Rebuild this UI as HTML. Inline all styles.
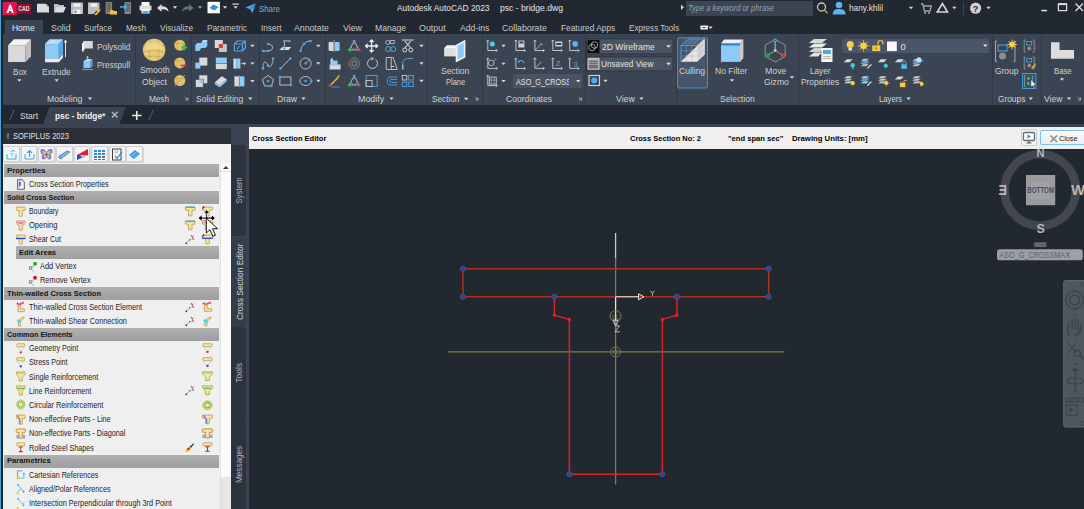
<!DOCTYPE html>
<html><head><meta charset="utf-8">
<style>
*{margin:0;padding:0;box-sizing:border-box}
html,body{width:1084px;height:509px;overflow:hidden;background:#212830;font-family:"Liberation Sans",sans-serif;position:relative}
.a{position:absolute}
.t{position:absolute;white-space:nowrap;line-height:1;transform-origin:0 0;z-index:5}
svg.a{overflow:visible}
</style></head><body>
<div class="a" style="left:0px;top:0px;width:1084px;height:34px;background:#222832;"></div>
<div class="a" style="left:0px;top:34px;width:1084px;height:71px;background:#3b4453;"></div>
<div class="a" style="left:0px;top:105px;width:1084px;height:19px;background:#222832;"></div>
<div class="a" style="left:0px;top:124px;width:1084px;height:385px;background:#3b4352;"></div>
<div class="a" style="left:3px;top:128px;width:228px;height:17px;background:#2a2f38;border-top-right-radius:3px;"></div>
<div class="a" style="left:3px;top:145px;width:228px;height:364px;background:#efefef;"></div>
<div class="a" style="left:249px;top:127px;width:835px;height:22px;background:#efefef;"></div>
<div class="a" style="left:249px;top:149px;width:835px;height:360px;background:#212830;"></div>
<span class="t" style="left:258.8px;top:3.96px;font-size:9.5px;color:#6cb2e2;font-weight:normal;font-style:normal;font-family:'Liberation Sans',sans-serif;transform:scaleX(0.828);">Share</span>
<span class="t" style="left:397.4px;top:3.46px;font-size:9.5px;color:#e4e4e4;font-weight:normal;font-style:normal;font-family:'Liberation Sans',sans-serif;transform:scaleX(0.880);">Autodesk AutoCAD 2023</span>
<span class="t" style="left:500.1px;top:3.46px;font-size:9.5px;color:#e4e4e4;font-weight:normal;font-style:normal;font-family:'Liberation Sans',sans-serif;transform:scaleX(0.904);">psc - bridge.dwg</span>
<div class="a" style="left:686px;top:1px;width:127px;height:15px;background:#3b4452;"></div>
<span class="t" style="left:688.3px;top:3.88px;font-size:9px;color:#9aa1aa;font-weight:normal;font-style:italic;font-family:'Liberation Sans',sans-serif;transform:scaleX(0.832);">Type a keyword or phrase</span>
<span class="t" style="left:849.0px;top:3.46px;font-size:9.5px;color:#e0e0e0;font-weight:normal;font-style:normal;font-family:'Liberation Sans',sans-serif;transform:scaleX(0.874);">hany.khlil</span>
<div class="a" style="left:5px;top:20px;width:38px;height:14px;background:#3b4453;"></div>
<span class="t" style="left:11.6px;top:22.66px;font-size:9.5px;color:#e8e8e8;font-weight:normal;font-style:normal;font-family:'Liberation Sans',sans-serif;transform:scaleX(0.892);">Home</span>
<span class="t" style="left:50.6px;top:22.66px;font-size:9.5px;color:#c8c8c8;font-weight:normal;font-style:normal;font-family:'Liberation Sans',sans-serif;transform:scaleX(0.928);">Solid</span>
<span class="t" style="left:83.7px;top:22.66px;font-size:9.5px;color:#c8c8c8;font-weight:normal;font-style:normal;font-family:'Liberation Sans',sans-serif;transform:scaleX(0.852);">Surface</span>
<span class="t" style="left:126.0px;top:22.66px;font-size:9.5px;color:#c8c8c8;font-weight:normal;font-style:normal;font-family:'Liberation Sans',sans-serif;transform:scaleX(0.861);">Mesh</span>
<span class="t" style="left:160.0px;top:22.66px;font-size:9.5px;color:#c8c8c8;font-weight:normal;font-style:normal;font-family:'Liberation Sans',sans-serif;transform:scaleX(0.872);">Visualize</span>
<span class="t" style="left:206.7px;top:22.66px;font-size:9.5px;color:#c8c8c8;font-weight:normal;font-style:normal;font-family:'Liberation Sans',sans-serif;transform:scaleX(0.869);">Parametric</span>
<span class="t" style="left:260.5px;top:22.66px;font-size:9.5px;color:#c8c8c8;font-weight:normal;font-style:normal;font-family:'Liberation Sans',sans-serif;transform:scaleX(0.863);">Insert</span>
<span class="t" style="left:294.3px;top:22.66px;font-size:9.5px;color:#c8c8c8;font-weight:normal;font-style:normal;font-family:'Liberation Sans',sans-serif;transform:scaleX(0.918);">Annotate</span>
<span class="t" style="left:343.0px;top:22.66px;font-size:9.5px;color:#c8c8c8;font-weight:normal;font-style:normal;font-family:'Liberation Sans',sans-serif;transform:scaleX(0.930);">View</span>
<span class="t" style="left:375.0px;top:22.66px;font-size:9.5px;color:#c8c8c8;font-weight:normal;font-style:normal;font-family:'Liberation Sans',sans-serif;transform:scaleX(0.903);">Manage</span>
<span class="t" style="left:419.4px;top:22.66px;font-size:9.5px;color:#c8c8c8;font-weight:normal;font-style:normal;font-family:'Liberation Sans',sans-serif;transform:scaleX(0.933);">Output</span>
<span class="t" style="left:459.7px;top:22.66px;font-size:9.5px;color:#c8c8c8;font-weight:normal;font-style:normal;font-family:'Liberation Sans',sans-serif;transform:scaleX(0.910);">Add-ins</span>
<span class="t" style="left:502.4px;top:22.66px;font-size:9.5px;color:#c8c8c8;font-weight:normal;font-style:normal;font-family:'Liberation Sans',sans-serif;transform:scaleX(0.922);">Collaborate</span>
<span class="t" style="left:561.0px;top:22.66px;font-size:9.5px;color:#c8c8c8;font-weight:normal;font-style:normal;font-family:'Liberation Sans',sans-serif;transform:scaleX(0.878);">Featured Apps</span>
<span class="t" style="left:629.0px;top:22.66px;font-size:9.5px;color:#c8c8c8;font-weight:normal;font-style:normal;font-family:'Liberation Sans',sans-serif;transform:scaleX(0.851);">Express Tools</span>
<div class="a" style="left:135px;top:35px;width:1px;height:69px;background:#313845;"></div>
<div class="a" style="left:191px;top:35px;width:1px;height:69px;background:#313845;"></div>
<div class="a" style="left:259px;top:35px;width:1px;height:69px;background:#313845;"></div>
<div class="a" style="left:325px;top:35px;width:1px;height:69px;background:#313845;"></div>
<div class="a" style="left:427px;top:35px;width:1px;height:69px;background:#313845;"></div>
<div class="a" style="left:482px;top:35px;width:1px;height:69px;background:#313845;"></div>
<div class="a" style="left:585px;top:35px;width:1px;height:69px;background:#313845;"></div>
<div class="a" style="left:676px;top:35px;width:1px;height:69px;background:#313845;"></div>
<div class="a" style="left:798px;top:35px;width:1px;height:69px;background:#313845;"></div>
<div class="a" style="left:992px;top:35px;width:1px;height:69px;background:#313845;"></div>
<div class="a" style="left:1041px;top:35px;width:1px;height:69px;background:#313845;"></div>
<span class="t" style="left:46.8px;top:93.96px;font-size:9.5px;color:#d2d2d2;font-weight:normal;font-style:normal;font-family:'Liberation Sans',sans-serif;transform:scaleX(0.918);">Modeling</span>
<span class="t" style="left:149.4px;top:93.96px;font-size:9.5px;color:#d2d2d2;font-weight:normal;font-style:normal;font-family:'Liberation Sans',sans-serif;transform:scaleX(0.861);">Mesh</span>
<span class="t" style="left:195.5px;top:93.96px;font-size:9.5px;color:#d2d2d2;font-weight:normal;font-style:normal;font-family:'Liberation Sans',sans-serif;transform:scaleX(0.896);">Solid Editing</span>
<span class="t" style="left:276.9px;top:93.96px;font-size:9.5px;color:#d2d2d2;font-weight:normal;font-style:normal;font-family:'Liberation Sans',sans-serif;transform:scaleX(0.898);">Draw</span>
<span class="t" style="left:358.3px;top:93.96px;font-size:9.5px;color:#d2d2d2;font-weight:normal;font-style:normal;font-family:'Liberation Sans',sans-serif;transform:scaleX(0.936);">Modify</span>
<span class="t" style="left:431.8px;top:93.96px;font-size:9.5px;color:#d2d2d2;font-weight:normal;font-style:normal;font-family:'Liberation Sans',sans-serif;transform:scaleX(0.865);">Section</span>
<span class="t" style="left:506.2px;top:93.96px;font-size:9.5px;color:#d2d2d2;font-weight:normal;font-style:normal;font-family:'Liberation Sans',sans-serif;transform:scaleX(0.898);">Coordinates</span>
<span class="t" style="left:615.7px;top:93.96px;font-size:9.5px;color:#d2d2d2;font-weight:normal;font-style:normal;font-family:'Liberation Sans',sans-serif;transform:scaleX(0.916);">View</span>
<span class="t" style="left:719.5px;top:93.96px;font-size:9.5px;color:#d2d2d2;font-weight:normal;font-style:normal;font-family:'Liberation Sans',sans-serif;transform:scaleX(0.888);">Selection</span>
<span class="t" style="left:878.7px;top:93.96px;font-size:9.5px;color:#d2d2d2;font-weight:normal;font-style:normal;font-family:'Liberation Sans',sans-serif;transform:scaleX(0.814);">Layers</span>
<span class="t" style="left:997.7px;top:93.96px;font-size:9.5px;color:#d2d2d2;font-weight:normal;font-style:normal;font-family:'Liberation Sans',sans-serif;transform:scaleX(0.876);">Groups</span>
<span class="t" style="left:1043.8px;top:93.96px;font-size:9.5px;color:#d2d2d2;font-weight:normal;font-style:normal;font-family:'Liberation Sans',sans-serif;transform:scaleX(0.901);">View</span>
<span class="t" style="left:13.0px;top:66.66px;font-size:9.5px;color:#d2d2d2;font-weight:normal;font-style:normal;font-family:'Liberation Sans',sans-serif;transform:scaleX(0.849);">Box</span>
<span class="t" style="left:42.3px;top:66.66px;font-size:9.5px;color:#d2d2d2;font-weight:normal;font-style:normal;font-family:'Liberation Sans',sans-serif;transform:scaleX(0.877);">Extrude</span>
<span class="t" style="left:96.6px;top:41.76px;font-size:9.5px;color:#d2d2d2;font-weight:normal;font-style:normal;font-family:'Liberation Sans',sans-serif;transform:scaleX(0.879);">Polysolid</span>
<span class="t" style="left:97.0px;top:59.66px;font-size:9.5px;color:#d2d2d2;font-weight:normal;font-style:normal;font-family:'Liberation Sans',sans-serif;transform:scaleX(0.845);">Presspull</span>
<span class="t" style="left:139.5px;top:65.36px;font-size:9.5px;color:#d2d2d2;font-weight:normal;font-style:normal;font-family:'Liberation Sans',sans-serif;transform:scaleX(0.913);">Smooth</span>
<span class="t" style="left:142.0px;top:76.66px;font-size:9.5px;color:#d2d2d2;font-weight:normal;font-style:normal;font-family:'Liberation Sans',sans-serif;transform:scaleX(0.907);">Object</span>
<span class="t" style="left:440.5px;top:65.86px;font-size:9.5px;color:#d2d2d2;font-weight:normal;font-style:normal;font-family:'Liberation Sans',sans-serif;transform:scaleX(0.890);">Section</span>
<span class="t" style="left:445.5px;top:77.16px;font-size:9.5px;color:#d2d2d2;font-weight:normal;font-style:normal;font-family:'Liberation Sans',sans-serif;transform:scaleX(0.790);">Plane</span>
<span class="t" style="left:679.3px;top:65.86px;font-size:9.5px;color:#d2d2d2;font-weight:normal;font-style:normal;font-family:'Liberation Sans',sans-serif;transform:scaleX(0.899);">Culling</span>
<span class="t" style="left:715.4px;top:65.86px;font-size:9.5px;color:#d2d2d2;font-weight:normal;font-style:normal;font-family:'Liberation Sans',sans-serif;transform:scaleX(0.900);">No Filter</span>
<span class="t" style="left:765.4px;top:65.86px;font-size:9.5px;color:#d2d2d2;font-weight:normal;font-style:normal;font-family:'Liberation Sans',sans-serif;transform:scaleX(0.921);">Move</span>
<span class="t" style="left:763.7px;top:77.16px;font-size:9.5px;color:#d2d2d2;font-weight:normal;font-style:normal;font-family:'Liberation Sans',sans-serif;transform:scaleX(0.907);">Gizmo</span>
<span class="t" style="left:809.7px;top:65.86px;font-size:9.5px;color:#d2d2d2;font-weight:normal;font-style:normal;font-family:'Liberation Sans',sans-serif;transform:scaleX(0.863);">Layer</span>
<span class="t" style="left:801.0px;top:77.16px;font-size:9.5px;color:#d2d2d2;font-weight:normal;font-style:normal;font-family:'Liberation Sans',sans-serif;transform:scaleX(0.880);">Properties</span>
<span class="t" style="left:995.1px;top:66.16px;font-size:9.5px;color:#d2d2d2;font-weight:normal;font-style:normal;font-family:'Liberation Sans',sans-serif;transform:scaleX(0.886);">Group</span>
<span class="t" style="left:1053.5px;top:66.16px;font-size:9.5px;color:#d2d2d2;font-weight:normal;font-style:normal;font-family:'Liberation Sans',sans-serif;transform:scaleX(0.817);">Base</span>
<svg class="a" style="left:0px;top:105px;" width="160" height="19" viewBox="0 0 160 19" preserveAspectRatio="none"><polygon points="43.2,19 49.5,2 125.8,2 119.5,19" fill="#3b4453"/><line x1="9.5" y1="15.5" x2="14" y2="5" stroke="#5a6270" stroke-width="1"/><line x1="148.6" y1="15.5" x2="153.3" y2="5" stroke="#5a6270" stroke-width="1"/><path d="M112,7 L117.5,12.5 M117.5,7 L112,12.5" stroke="#c0c4ca" stroke-width="1.2"/><path d="M132,10.5 H141.5 M136.75,6 V15" stroke="#e6e6e6" stroke-width="1.6"/></svg>
<span class="t" style="left:19.7px;top:110.76px;font-size:9.5px;color:#d8d8d8;font-weight:normal;font-style:normal;font-family:'Liberation Sans',sans-serif;transform:scaleX(0.897);">Start</span>
<span class="t" style="left:55.0px;top:110.76px;font-size:9.5px;color:#f0f0f0;font-weight:bold;font-style:normal;font-family:'Liberation Sans',sans-serif;transform:scaleX(0.874);">psc - bridge*</span>
<div class="a" style="left:7px;top:133px;width:2px;height:6px;background:#6a707a;"></div>
<span class="t" style="left:13.4px;top:130.76px;font-size:9.5px;color:#e0e0e0;font-weight:normal;font-style:normal;font-family:'Liberation Sans',sans-serif;transform:scaleX(0.789);">SOFIPLUS 2023</span>
<span class="t" style="left:251.6px;top:135.23px;font-size:8px;color:#000;font-weight:bold;font-style:normal;font-family:'Liberation Sans',sans-serif;transform:scaleX(0.939);">Cross Section Editor</span>
<span class="t" style="left:630.0px;top:135.23px;font-size:8px;color:#000;font-weight:bold;font-style:normal;font-family:'Liberation Sans',sans-serif;transform:scaleX(0.934);">Cross Section No: 2</span>
<span class="t" style="left:728.0px;top:135.23px;font-size:8px;color:#000;font-weight:bold;font-style:normal;font-family:'Liberation Sans',sans-serif;transform:scaleX(0.950);">"end  span sec"</span>
<span class="t" style="left:791.5px;top:135.23px;font-size:8px;color:#000;font-weight:bold;font-style:normal;font-family:'Liberation Sans',sans-serif;transform:scaleX(0.965);">Drawing Units: [mm]</span>
<div class="a" style="left:1px;top:0px;width:2px;height:509px;background:#1e222a;"></div>
<div class="a" style="left:0px;top:0px;width:1.2px;height:509px;background:#4aa6d6;"></div>
<div class="a" style="left:3px;top:144px;width:228px;height:18px;background:#f2f2f2;"></div>
<div class="a" style="left:3px;top:146px;width:16.8px;height:16px;background:#f4f4f4;border:1px solid #cfcfcf;border-radius:1px;box-shadow:1px 1px 0 #d8d8d8;"></div>
<div class="a" style="left:20.7px;top:146px;width:16.8px;height:16px;background:#f4f4f4;border:1px solid #cfcfcf;border-radius:1px;box-shadow:1px 1px 0 #d8d8d8;"></div>
<div class="a" style="left:38.1px;top:146px;width:16.8px;height:16px;background:#f4f4f4;border:1px solid #cfcfcf;border-radius:1px;box-shadow:1px 1px 0 #d8d8d8;"></div>
<div class="a" style="left:55.8px;top:146px;width:16.8px;height:16px;background:#f4f4f4;border:1px solid #cfcfcf;border-radius:1px;box-shadow:1px 1px 0 #d8d8d8;"></div>
<div class="a" style="left:73.5px;top:146px;width:16.8px;height:16px;background:#f4f4f4;border:1px solid #cfcfcf;border-radius:1px;box-shadow:1px 1px 0 #d8d8d8;"></div>
<div class="a" style="left:91.2px;top:146px;width:16.8px;height:16px;background:#f4f4f4;border:1px solid #cfcfcf;border-radius:1px;box-shadow:1px 1px 0 #d8d8d8;"></div>
<div class="a" style="left:108.9px;top:146px;width:16.8px;height:16px;background:#f4f4f4;border:1px solid #cfcfcf;border-radius:1px;box-shadow:1px 1px 0 #d8d8d8;"></div>
<div class="a" style="left:126.3px;top:146px;width:16.8px;height:16px;background:#f4f4f4;border:1px solid #cfcfcf;border-radius:1px;box-shadow:1px 1px 0 #d8d8d8;"></div>
<svg class="a" style="left:5px;top:147.5px;" width="13" height="13" viewBox="0 0 13 13" preserveAspectRatio="none"><path d="M2,6 V11 H11 V6" fill="none" stroke="#3aa8e8" stroke-width="1"/><text x="6.5" y="9" font-size="6" fill="#3aa8e8" text-anchor="middle" font-family="Liberation Sans">?</text><path d="M6,4 L8,2 L10,4" fill="none" stroke="#3aa8e8"/></svg>
<svg class="a" style="left:22.7px;top:147.5px;" width="13" height="13" viewBox="0 0 13 13" preserveAspectRatio="none"><path d="M2,6 V11 H11 V6" fill="none" stroke="#3aa8e8" stroke-width="1"/><path d="M6.5,9 V3 M4,5 L6.5,2.5 L9,5" fill="none" stroke="#3aa8e8" stroke-width="1.2"/></svg>
<svg class="a" style="left:40.1px;top:147.5px;" width="13" height="13" viewBox="0 0 13 13" preserveAspectRatio="none"><path d="M6.5,4 C5,1 1,0 0.5,2.5 C0,5 2,6.5 3,6.5 C1,7.5 1,11 3.5,11.5 C5,11.8 6,10 6.5,9 C7,10 8,11.8 9.5,11.5 C12,11 12,7.5 10,6.5 C11,6.5 13,5 12.5,2.5 C12,0 8,1 6.5,4Z" fill="#8a70d8"/><path d="M6.5,5 C5.5,3 2.5,2.5 2.3,3.5 C2.2,5 3.5,6.3 5,6.5 C3.5,7 2.8,9.5 4,10 C5,10.3 6,8.5 6.5,7.8 C7,8.5 8,10.3 9,10 C10.2,9.5 9.5,7 8,6.5 C9.5,6.3 10.8,5 10.7,3.5 C10.5,2.5 7.5,3 6.5,5Z" fill="#a8e050"/><path d="M6.5,5.5 C6,4.5 4.5,4.3 4.5,5.2 C4.5,6.2 5.5,6.8 6.5,8.2 C7.5,6.8 8.5,6.2 8.5,5.2 C8.5,4.3 7,4.5 6.5,5.5Z" fill="#f0d020"/><circle cx="6.5" cy="6.5" r="1.2" fill="#e02828"/></svg>
<svg class="a" style="left:57.8px;top:147.5px;" width="13" height="13" viewBox="0 0 13 13" preserveAspectRatio="none"><path d="M1,8 L9,3 L12,4 L4,10 Z" fill="#7ab8e0" stroke="#4a7aa8" stroke-width="0.8"/><path d="M1,8 L1,10 L4,11" fill="none" stroke="#4a7aa8"/></svg>
<svg class="a" style="left:75.5px;top:147.5px;" width="13" height="13" viewBox="0 0 13 13" preserveAspectRatio="none"><path d="M1,7 L12,7 L12,1 Z" fill="#e02030"/><path d="M1,7 L12,7 L1,12 Z" fill="#2050c8"/><path d="M4,7 L12,7 L6,10 Z" fill="#90c0f0"/></svg>
<svg class="a" style="left:93.2px;top:147.5px;" width="13" height="13" viewBox="0 0 13 13" preserveAspectRatio="none"><g fill="#2a8ae0"><rect x="1" y="2" width="3" height="2"/><rect x="5" y="2" width="3" height="2"/><rect x="9" y="2" width="3" height="2"/><rect x="1" y="5" width="3" height="2"/><rect x="5" y="5" width="3" height="2"/><rect x="9" y="5" width="3" height="2"/><rect x="1" y="8" width="3" height="2"/></g><g fill="#707070"><rect x="5" y="8" width="3" height="2"/><rect x="9" y="8" width="3" height="2"/><rect x="1" y="11" width="3" height="1"/><rect x="5" y="11" width="3" height="1"/><rect x="9" y="11" width="3" height="1"/></g></svg>
<svg class="a" style="left:110.9px;top:147.5px;" width="13" height="13" viewBox="0 0 13 13" preserveAspectRatio="none"><rect x="1.5" y="1" width="8.5" height="11" fill="#f8f8f8" stroke="#404040" stroke-width="1"/><path d="M3.2,3 H8 M3.2,4.8 H7" stroke="#909090" stroke-width="0.6"/><path d="M4,8 L6,10.5 L11,4" fill="none" stroke="#2a90e0" stroke-width="1.3"/></svg>
<svg class="a" style="left:128.3px;top:147.5px;" width="13" height="13" viewBox="0 0 13 13" preserveAspectRatio="none"><path d="M1,7 L7,2 L12,6 L6,11 Z" fill="#3a9ae8"/><path d="M3,6 L8,9 M5,4.5 L10,7.5 M4,8 L9,3.5" stroke="#9ad0f8" stroke-width="0.6"/></svg>
<div class="a" style="left:4px;top:164px;width:215px;height:13px;background:linear-gradient(#b0b0b0,#9e9e9e);"></div>
<span class="t" style="left:7.2px;top:166.83px;font-size:8px;color:#141414;font-weight:bold;font-style:normal;font-family:'Liberation Sans',sans-serif;transform:scaleX(0.975);">Properties</span>
<div class="a" style="left:4px;top:191px;width:215px;height:13px;background:linear-gradient(#b0b0b0,#9e9e9e);"></div>
<span class="t" style="left:7.2px;top:193.83px;font-size:8px;color:#141414;font-weight:bold;font-style:normal;font-family:'Liberation Sans',sans-serif;transform:scaleX(0.887);">Solid Cross Section</span>
<div class="a" style="left:15.5px;top:246px;width:203.5px;height:13px;background:linear-gradient(#b0b0b0,#9e9e9e);"></div>
<span class="t" style="left:18.5px;top:248.83px;font-size:8px;color:#141414;font-weight:bold;font-style:normal;font-family:'Liberation Sans',sans-serif;transform:scaleX(0.943);">Edit Areas</span>
<div class="a" style="left:4px;top:287px;width:215px;height:13px;background:linear-gradient(#b0b0b0,#9e9e9e);"></div>
<span class="t" style="left:7.2px;top:289.83px;font-size:8px;color:#141414;font-weight:bold;font-style:normal;font-family:'Liberation Sans',sans-serif;transform:scaleX(0.940);">Thin-walled Cross Section</span>
<div class="a" style="left:4px;top:328px;width:215px;height:13px;background:linear-gradient(#b0b0b0,#9e9e9e);"></div>
<span class="t" style="left:7.2px;top:330.83px;font-size:8px;color:#141414;font-weight:bold;font-style:normal;font-family:'Liberation Sans',sans-serif;transform:scaleX(0.905);">Common Elements</span>
<div class="a" style="left:4px;top:454.6px;width:215px;height:13px;background:linear-gradient(#b0b0b0,#9e9e9e);"></div>
<span class="t" style="left:7.2px;top:457.43px;font-size:8px;color:#141414;font-weight:bold;font-style:normal;font-family:'Liberation Sans',sans-serif;transform:scaleX(0.958);">Parametrics</span>
<div class="a" style="left:220.3px;top:162.7px;width:10.5px;height:346.3px;background:#e6e6e6;border-left:1px solid #dcdcdc;"></div>
<div class="a" style="left:220.3px;top:172.4px;width:10.5px;height:305px;background:#fafafa;border-left:1px solid #e2e2e2;"></div>
<div class="a" style="left:220.3px;top:162.7px;width:10.5px;height:9.7px;background:#fbfbfb;border-left:1px solid #e2e2e2;border-bottom:1px solid #e0e0e0;"></div>
<svg class="a" style="left:222.5px;top:166px;" width="5.8" height="3" viewBox="0 0 5.8 3" preserveAspectRatio="none"><path d="M0,3 L2.9,0 L5.8,3 Z" fill="#444"/></svg>
<span class="t" style="left:28.9px;top:180.12px;font-size:8.6px;color:#1c1c2c;font-weight:normal;font-style:normal;font-family:'Liberation Sans',sans-serif;transform:scaleX(0.837);">Cross Section Properties</span>
<svg class="a" style="left:16.3px;top:178.5px;" width="9.5" height="11" viewBox="0 0 12 12" preserveAspectRatio="none"><path d="M2,0.8 H8 L10.5,3.3 V11.2 H2 Z" fill="#f4f4fb" stroke="#303030" stroke-width="0.9"/><path d="M4,3 H7 L6,5 L7,7 H4 Z" fill="#6a60d8"/><rect x="3.5" y="3" width="1.2" height="6" fill="#6a60d8"/></svg>
<span class="t" style="left:28.9px;top:207.12px;font-size:8.6px;color:#1c1c2c;font-weight:normal;font-style:normal;font-family:'Liberation Sans',sans-serif;transform:scaleX(0.802);">Boundary</span>
<svg class="a" style="left:16.3px;top:205.5px;" width="9.5" height="11" viewBox="0 0 12 12" preserveAspectRatio="none"><path d="M1,1.2 H11 Q11.6,1.2 11.6,2 V4 Q11.6,4.8 11,4.8 H8 V10.5 Q8,11.2 7.3,11.2 H4.7 Q4,11.2 4,10.5 V4.8 H1 Q0.4,4.8 0.4,4 V2 Q0.4,1.2 1,1.2Z" fill="#f3e7a2" stroke="#b89640" stroke-width="0.9"/></svg>
<svg class="a" style="left:184.5px;top:205.8px;" width="10.5" height="10.5" viewBox="0 0 12 12" preserveAspectRatio="none"><path d="M1,1.2 H11 Q11.6,1.2 11.6,2 V4 Q11.6,4.8 11,4.8 H8 V10.5 Q8,11.2 7.3,11.2 H4.7 Q4,11.2 4,10.5 V4.8 H1 Q0.4,4.8 0.4,4 V2 Q0.4,1.2 1,1.2Z" fill="#f3e7a2" stroke="#b89640" stroke-width="0.9"/><rect x="0.8" y="0.6" width="10.4" height="1.6" fill="#40a8e8"/></svg>
<svg class="a" style="left:201.7px;top:205.8px;" width="11" height="10.5" viewBox="0 0 12 12" preserveAspectRatio="none"><path d="M1,1.2 H11 Q11.6,1.2 11.6,2 V4 Q11.6,4.8 11,4.8 H8 V10.5 Q8,11.2 7.3,11.2 H4.7 Q4,11.2 4,10.5 V4.8 H1 Q0.4,4.8 0.4,4 V2 Q0.4,1.2 1,1.2Z" fill="#f3e7a2" stroke="#b89640" stroke-width="0.9"/><path d="M0.5,3 L2.5,0.5" stroke="#7a2050" stroke-width="1.5"/></svg>
<span class="t" style="left:28.9px;top:221.12px;font-size:8.6px;color:#1c1c2c;font-weight:normal;font-style:normal;font-family:'Liberation Sans',sans-serif;transform:scaleX(0.874);">Opening</span>
<svg class="a" style="left:184.5px;top:219.8px;" width="10.5" height="10.5" viewBox="0 0 12 12" preserveAspectRatio="none"><path d="M1,1.2 H11 Q11.6,1.2 11.6,2 V4 Q11.6,4.8 11,4.8 H8 V10.5 Q8,11.2 7.3,11.2 H4.7 Q4,11.2 4,10.5 V4.8 H1 Q0.4,4.8 0.4,4 V2 Q0.4,1.2 1,1.2Z" fill="#f3e7a2" stroke="#b89640" stroke-width="0.9"/><rect x="0.8" y="0.6" width="10.4" height="1.6" fill="#40a8e8"/></svg>
<svg class="a" style="left:201.7px;top:219.8px;" width="11" height="10.5" viewBox="0 0 12 12" preserveAspectRatio="none"><path d="M1,1.2 H11 Q11.6,1.2 11.6,2 V4 Q11.6,4.8 11,4.8 H8 V10.5 Q8,11.2 7.3,11.2 H4.7 Q4,11.2 4,10.5 V4.8 H1 Q0.4,4.8 0.4,4 V2 Q0.4,1.2 1,1.2Z" fill="#f3e7a2" stroke="#b89640" stroke-width="0.9"/><path d="M0.5,3 L2.5,0.5" stroke="#7a2050" stroke-width="1.5"/></svg>
<span class="t" style="left:28.9px;top:235.12px;font-size:8.6px;color:#1c1c2c;font-weight:normal;font-style:normal;font-family:'Liberation Sans',sans-serif;transform:scaleX(0.827);">Shear Cut</span>
<svg class="a" style="left:16.3px;top:233.5px;" width="9.5" height="11" viewBox="0 0 12 12" preserveAspectRatio="none"><path d="M1,1.2 H11 Q11.6,1.2 11.6,2 V4 Q11.6,4.8 11,4.8 H8 V10.5 Q8,11.2 7.3,11.2 H4.7 Q4,11.2 4,10.5 V4.8 H1 Q0.4,4.8 0.4,4 V2 Q0.4,1.2 1,1.2Z" fill="#f3e7a2" stroke="#b89640" stroke-width="0.9"/><rect x="0" y="4.2" width="12" height="1.4" fill="#2040d0"/></svg>
<svg class="a" style="left:184.5px;top:233.8px;" width="10.5" height="10.5" viewBox="0 0 12 12" preserveAspectRatio="none"><circle cx="1.5" cy="10.5" r="1.1" fill="#1a4a9a"/><path d="M2.5,9.5 L5,7" stroke="#c03040" stroke-width="0.7"/><circle cx="5.5" cy="6.5" r="0.9" fill="#d02030"/><path d="M7,1 L8,3.5 L10,2 M8,4 L9.5,5 M7.5,5.5 L10.5,6" stroke="#7a2050" stroke-width="0.8" fill="none"/></svg>
<svg class="a" style="left:201.7px;top:233.8px;" width="11" height="10.5" viewBox="0 0 12 12" preserveAspectRatio="none"><path d="M1,1.2 H11 Q11.6,1.2 11.6,2 V4 Q11.6,4.8 11,4.8 H8 V10.5 Q8,11.2 7.3,11.2 H4.7 Q4,11.2 4,10.5 V4.8 H1 Q0.4,4.8 0.4,4 V2 Q0.4,1.2 1,1.2Z" fill="#f3e7a2" stroke="#b89640" stroke-width="0.9"/><rect x="0" y="4.2" width="12" height="1.4" fill="#2040d0"/><path d="M0.5,3 L2.5,0.5" stroke="#7a2050" stroke-width="1.5"/></svg>
<span class="t" style="left:40.0px;top:262.12px;font-size:8.6px;color:#1c1c2c;font-weight:normal;font-style:normal;font-family:'Liberation Sans',sans-serif;transform:scaleX(0.868);">Add Vertex</span>
<svg class="a" style="left:28px;top:261px;" width="10" height="11" viewBox="0 0 12 12" preserveAspectRatio="none"><circle cx="3" cy="7.5" r="1.6" fill="none" stroke="#404040" stroke-width="0.8"/><path d="M4,8 L8,4 M4,9 L7,12" stroke="#5a9ac8" stroke-width="0.8"/><circle cx="8.5" cy="3" r="2.3" fill="#20b020"/></svg>
<span class="t" style="left:40.0px;top:276.12px;font-size:8.6px;color:#1c1c2c;font-weight:normal;font-style:normal;font-family:'Liberation Sans',sans-serif;transform:scaleX(0.863);">Remove Vertex</span>
<svg class="a" style="left:28px;top:275px;" width="10" height="11" viewBox="0 0 12 12" preserveAspectRatio="none"><circle cx="3" cy="7.5" r="1.6" fill="none" stroke="#404040" stroke-width="0.8"/><path d="M4,8 L8,4 M4,9 L7,12" stroke="#5a9ac8" stroke-width="0.8"/><circle cx="8.5" cy="3" r="2.3" fill="#d01818"/></svg>
<span class="t" style="left:28.9px;top:303.12px;font-size:8.6px;color:#1c1c2c;font-weight:normal;font-style:normal;font-family:'Liberation Sans',sans-serif;transform:scaleX(0.846);">Thin-walled Cross Section Element</span>
<svg class="a" style="left:16.3px;top:301.5px;" width="9.5" height="11" viewBox="0 0 12 12" preserveAspectRatio="none"><path d="M2.5,3 V10.5 H10.5 V7.5 H5.5 V3Z" fill="#f3e7a2" stroke="#b89640" stroke-width="0.9"/><path d="M3,3 L10,0.5" stroke="#ff5070" stroke-width="2.2"/><path d="M1,2.5 L2.5,0.8" stroke="#7a2050" stroke-width="1.3"/></svg>
<svg class="a" style="left:184.5px;top:301.8px;" width="10.5" height="10.5" viewBox="0 0 12 12" preserveAspectRatio="none"><circle cx="1.5" cy="10.5" r="1.1" fill="#1a4a9a"/><path d="M2.5,9.5 L5,7" stroke="#c03040" stroke-width="0.7"/><circle cx="5.5" cy="6.5" r="0.9" fill="#d02030"/><path d="M7,1 L8,3.5 L10,2 M8,4 L9.5,5 M7.5,5.5 L10.5,6" stroke="#7a2050" stroke-width="0.8" fill="none"/></svg>
<svg class="a" style="left:201.7px;top:301.8px;" width="11" height="10.5" viewBox="0 0 12 12" preserveAspectRatio="none"><path d="M2.5,3 V10.5 H10.5 V7.5 H5.5 V3Z" fill="#f3e7a2" stroke="#b89640" stroke-width="0.9"/><path d="M3,3 L10,0.5" stroke="#ff5070" stroke-width="2.2"/><path d="M1,2.5 L2.5,0.8" stroke="#7a2050" stroke-width="1.3"/></svg>
<span class="t" style="left:28.9px;top:317.12px;font-size:8.6px;color:#1c1c2c;font-weight:normal;font-style:normal;font-family:'Liberation Sans',sans-serif;transform:scaleX(0.849);">Thin-walled Shear Connection</span>
<svg class="a" style="left:16.3px;top:315.5px;" width="9.5" height="11" viewBox="0 0 12 12" preserveAspectRatio="none"><path d="M3,11 V5 L9,0.8 L10.5,2 L5.5,6 V11Z" fill="#f3e7a2" stroke="#b89640" stroke-width="0.9"/><path d="M1,5.5 L5,8 L6.5,5.5 L3,3.5Z" fill="#30e0f0"/></svg>
<svg class="a" style="left:184.5px;top:315.8px;" width="10.5" height="10.5" viewBox="0 0 12 12" preserveAspectRatio="none"><circle cx="1.5" cy="10.5" r="1.1" fill="#1a4a9a"/><path d="M2.5,9.5 L5,7" stroke="#c03040" stroke-width="0.7"/><circle cx="5.5" cy="6.5" r="0.9" fill="#d02030"/><path d="M7,1 L8,3.5 L10,2 M8,4 L9.5,5 M7.5,5.5 L10.5,6" stroke="#7a2050" stroke-width="0.8" fill="none"/></svg>
<svg class="a" style="left:201.7px;top:315.8px;" width="11" height="10.5" viewBox="0 0 12 12" preserveAspectRatio="none"><path d="M3,11 V5 L9,0.8 L10.5,2 L5.5,6 V11Z" fill="#f3e7a2" stroke="#b89640" stroke-width="0.9"/><path d="M1,5.5 L5,8 L6.5,5.5 L3,3.5Z" fill="#30e0f0"/></svg>
<span class="t" style="left:28.9px;top:344.12px;font-size:8.6px;color:#1c1c2c;font-weight:normal;font-style:normal;font-family:'Liberation Sans',sans-serif;transform:scaleX(0.824);">Geometry Point</span>
<svg class="a" style="left:16.3px;top:342.5px;" width="9.5" height="11" viewBox="0 0 12 12" preserveAspectRatio="none"><rect x="1" y="0.8" width="10" height="3.4" rx="0.8" fill="#f3e7a2" stroke="#b89640" stroke-width="0.8"/><path d="M1.5,4.5 L6,10 L10.5,4.5" fill="none" stroke="#b8b8b8" stroke-width="0.6"/><circle cx="6" cy="10.2" r="1.3" fill="#e02020"/></svg>
<svg class="a" style="left:201.7px;top:342.8px;" width="11" height="10.5" viewBox="0 0 12 12" preserveAspectRatio="none"><rect x="1" y="0.8" width="10" height="3.4" rx="0.8" fill="#f3e7a2" stroke="#b89640" stroke-width="0.8"/><path d="M1.5,4.5 L6,10 L10.5,4.5" fill="none" stroke="#b8b8b8" stroke-width="0.6"/><circle cx="6" cy="10.2" r="1.3" fill="#e02020"/></svg>
<span class="t" style="left:28.9px;top:358.32px;font-size:8.6px;color:#1c1c2c;font-weight:normal;font-style:normal;font-family:'Liberation Sans',sans-serif;transform:scaleX(0.831);">Stress Point</span>
<svg class="a" style="left:16.3px;top:356.7px;" width="9.5" height="11" viewBox="0 0 12 12" preserveAspectRatio="none"><rect x="1" y="0.8" width="10" height="3.4" rx="0.8" fill="#f3e7a2" stroke="#b89640" stroke-width="0.8"/><path d="M1.5,4.5 L6,10 L10.5,4.5" fill="none" stroke="#b8b8b8" stroke-width="0.6"/><circle cx="6" cy="10.2" r="1.3" fill="#2040e0"/></svg>
<svg class="a" style="left:201.7px;top:357.0px;" width="11" height="10.5" viewBox="0 0 12 12" preserveAspectRatio="none"><rect x="1" y="0.8" width="10" height="3.4" rx="0.8" fill="#f3e7a2" stroke="#b89640" stroke-width="0.8"/><path d="M1.5,4.5 L6,10 L10.5,4.5" fill="none" stroke="#b8b8b8" stroke-width="0.6"/><circle cx="6" cy="10.2" r="1.3" fill="#2040e0"/></svg>
<span class="t" style="left:28.9px;top:372.52px;font-size:8.6px;color:#1c1c2c;font-weight:normal;font-style:normal;font-family:'Liberation Sans',sans-serif;transform:scaleX(0.843);">Single Reinforcement</span>
<svg class="a" style="left:16.3px;top:370.9px;" width="9.5" height="11" viewBox="0 0 12 12" preserveAspectRatio="none"><path d="M0.6,1 H11.4 V3.5 L8,7 V11 H4 V7 L0.6,3.5Z" fill="#f3e7a2" stroke="#b89640" stroke-width="0.9"/><path d="M2,2.3 H10" stroke="#40d040" stroke-width="1" stroke-dasharray="1.5,0.8"/></svg>
<svg class="a" style="left:201.7px;top:371.2px;" width="11" height="10.5" viewBox="0 0 12 12" preserveAspectRatio="none"><path d="M0.6,1 H11.4 V3.5 L8,7 V11 H4 V7 L0.6,3.5Z" fill="#f3e7a2" stroke="#b89640" stroke-width="0.9"/><path d="M2,2.3 H10" stroke="#40d040" stroke-width="1" stroke-dasharray="1.5,0.8"/></svg>
<span class="t" style="left:28.9px;top:386.72px;font-size:8.6px;color:#1c1c2c;font-weight:normal;font-style:normal;font-family:'Liberation Sans',sans-serif;transform:scaleX(0.837);">Line Reinforcement</span>
<svg class="a" style="left:16.3px;top:385.1px;" width="9.5" height="11" viewBox="0 0 12 12" preserveAspectRatio="none"><path d="M0.6,1 H11.4 V3.5 L8,7 V11 H4 V7 L0.6,3.5Z" fill="#f3e7a2" stroke="#b89640" stroke-width="0.9"/><rect x="2" y="3" width="8" height="1.6" fill="#40d040"/></svg>
<svg class="a" style="left:184.5px;top:385.40000000000003px;" width="10.5" height="10.5" viewBox="0 0 12 12" preserveAspectRatio="none"><circle cx="1.5" cy="10.5" r="1.1" fill="#1a4a9a"/><path d="M2.5,9.5 L5,7" stroke="#c03040" stroke-width="0.7"/><circle cx="5.5" cy="6.5" r="0.9" fill="#d02030"/><path d="M7,1 L8,3.5 L10,2 M8,4 L9.5,5 M7.5,5.5 L10.5,6" stroke="#7a2050" stroke-width="0.8" fill="none"/></svg>
<svg class="a" style="left:201.7px;top:385.40000000000003px;" width="11" height="10.5" viewBox="0 0 12 12" preserveAspectRatio="none"><path d="M0.6,1 H11.4 V3.5 L8,7 V11 H4 V7 L0.6,3.5Z" fill="#f3e7a2" stroke="#b89640" stroke-width="0.9"/><rect x="2" y="3" width="8" height="1.6" fill="#40d040"/></svg>
<span class="t" style="left:28.9px;top:400.92px;font-size:8.6px;color:#1c1c2c;font-weight:normal;font-style:normal;font-family:'Liberation Sans',sans-serif;transform:scaleX(0.846);">Circular Reinforcement</span>
<svg class="a" style="left:16.3px;top:399.3px;" width="9.5" height="11" viewBox="0 0 12 12" preserveAspectRatio="none"><circle cx="6" cy="6" r="5" fill="#f3e7a2" stroke="#b89640" stroke-width="0.9"/><circle cx="6" cy="6" r="3" fill="none" stroke="#40d040" stroke-width="1.2"/><circle cx="6" cy="6" r="1.8" fill="#f3e7a2"/></svg>
<svg class="a" style="left:201.7px;top:399.6px;" width="11" height="10.5" viewBox="0 0 12 12" preserveAspectRatio="none"><circle cx="6" cy="6" r="5" fill="#f3e7a2" stroke="#b89640" stroke-width="0.9"/><circle cx="6" cy="6" r="3" fill="none" stroke="#40d040" stroke-width="1.2"/><circle cx="6" cy="6" r="1.8" fill="#f3e7a2"/></svg>
<span class="t" style="left:28.9px;top:415.12px;font-size:8.6px;color:#1c1c2c;font-weight:normal;font-style:normal;font-family:'Liberation Sans',sans-serif;transform:scaleX(0.843);">Non-effective Parts - Line</span>
<svg class="a" style="left:16.3px;top:413.5px;" width="9.5" height="11" viewBox="0 0 12 12" preserveAspectRatio="none"><path d="M1,1.2 H11 Q11.6,1.2 11.6,2 V4 Q11.6,4.8 11,4.8 H8 V10.5 Q8,11.2 7.3,11.2 H4.7 Q4,11.2 4,10.5 V4.8 H1 Q0.4,4.8 0.4,4 V2 Q0.4,1.2 1,1.2Z" fill="#f3e7a2" stroke="#b89640" stroke-width="0.9"/><path d="M1.5,1.5 L5,6 L5,11" fill="none" stroke="#8a70d0" stroke-width="1.4"/></svg>
<svg class="a" style="left:201.7px;top:413.8px;" width="11" height="10.5" viewBox="0 0 12 12" preserveAspectRatio="none"><path d="M1,1.2 H11 Q11.6,1.2 11.6,2 V4 Q11.6,4.8 11,4.8 H8 V10.5 Q8,11.2 7.3,11.2 H4.7 Q4,11.2 4,10.5 V4.8 H1 Q0.4,4.8 0.4,4 V2 Q0.4,1.2 1,1.2Z" fill="#f3e7a2" stroke="#b89640" stroke-width="0.9"/><path d="M1.5,1.5 L5,6 L5,11" fill="none" stroke="#8a70d0" stroke-width="1.4"/></svg>
<span class="t" style="left:28.9px;top:429.32px;font-size:8.6px;color:#1c1c2c;font-weight:normal;font-style:normal;font-family:'Liberation Sans',sans-serif;transform:scaleX(0.842);">Non-effective Parts - Diagonal</span>
<svg class="a" style="left:16.3px;top:427.7px;" width="9.5" height="11" viewBox="0 0 12 12" preserveAspectRatio="none"><path d="M1,1.2 H11 Q11.6,1.2 11.6,2 V4 Q11.6,4.8 11,4.8 H8 V10.5 Q8,11.2 7.3,11.2 H4.7 Q4,11.2 4,10.5 V4.8 H1 Q0.4,4.8 0.4,4 V2 Q0.4,1.2 1,1.2Z" fill="#f3e7a2" stroke="#b89640" stroke-width="0.9"/><path d="M0.5,7.5 H11.5 V11.5 H0.5Z" fill="#9a80d8" opacity="0.75"/><path d="M1,1.2 H11 Q11.6,1.2 11.6,2 V4 Q11.6,4.8 11,4.8 H8 V10.5 Q8,11.2 7.3,11.2 H4.7 Q4,11.2 4,10.5 V4.8 H1 Q0.4,4.8 0.4,4 V2 Q0.4,1.2 1,1.2Z" fill="#f3e7a2" stroke="#b89640" stroke-width="0.9"/></svg>
<svg class="a" style="left:201.7px;top:428.0px;" width="11" height="10.5" viewBox="0 0 12 12" preserveAspectRatio="none"><path d="M1,1.2 H11 Q11.6,1.2 11.6,2 V4 Q11.6,4.8 11,4.8 H8 V10.5 Q8,11.2 7.3,11.2 H4.7 Q4,11.2 4,10.5 V4.8 H1 Q0.4,4.8 0.4,4 V2 Q0.4,1.2 1,1.2Z" fill="#f3e7a2" stroke="#b89640" stroke-width="0.9"/><path d="M0.5,7.5 H11.5 V11.5 H0.5Z" fill="#9a80d8" opacity="0.75"/><path d="M1,1.2 H11 Q11.6,1.2 11.6,2 V4 Q11.6,4.8 11,4.8 H8 V10.5 Q8,11.2 7.3,11.2 H4.7 Q4,11.2 4,10.5 V4.8 H1 Q0.4,4.8 0.4,4 V2 Q0.4,1.2 1,1.2Z" fill="#f3e7a2" stroke="#b89640" stroke-width="0.9"/></svg>
<span class="t" style="left:28.9px;top:443.52px;font-size:8.6px;color:#1c1c2c;font-weight:normal;font-style:normal;font-family:'Liberation Sans',sans-serif;transform:scaleX(0.832);">Rolled Steel Shapes</span>
<svg class="a" style="left:16.3px;top:441.9px;" width="9.5" height="11" viewBox="0 0 12 12" preserveAspectRatio="none"><rect x="1" y="0.8" width="10" height="3.4" rx="0.8" fill="#f3e7a2" stroke="#b89640" stroke-width="0.8"/><path d="M3.5,5.5 H8.5 M6,5.5 V10.5 M3.5,10.5 H8.5" stroke="#d02030" stroke-width="1.2"/></svg>
<svg class="a" style="left:184.5px;top:442.2px;" width="10.5" height="10.5" viewBox="0 0 12 12" preserveAspectRatio="none"><path d="M1,11 L7,5" stroke="#f0c020" stroke-width="3"/><path d="M6,6 L10,2" stroke="#303030" stroke-width="1.5"/><circle cx="4" cy="8" r="1.5" fill="#d02030"/><path d="M8.5,1 L11,0.5 L10,3" fill="#a0c8f0"/></svg>
<svg class="a" style="left:201.7px;top:442.2px;" width="11" height="10.5" viewBox="0 0 12 12" preserveAspectRatio="none"><rect x="1" y="0.8" width="10" height="3.4" rx="0.8" fill="#f3e7a2" stroke="#b89640" stroke-width="0.8"/><path d="M3.5,5.5 H8.5 M6,5.5 V10.5 M3.5,10.5 H8.5" stroke="#d02030" stroke-width="1.2"/></svg>
<span class="t" style="left:28.9px;top:470.72px;font-size:8.6px;color:#1c1c2c;font-weight:normal;font-style:normal;font-family:'Liberation Sans',sans-serif;transform:scaleX(0.834);">Cartesian References</span>
<svg class="a" style="left:16.3px;top:469.1px;" width="9.5" height="11" viewBox="0 0 12 12" preserveAspectRatio="none"><path d="M2,10 V2 H6" fill="none" stroke="#3a90e0" stroke-width="1"/><path d="M6,1 L8,2 L6,3Z" fill="#3a90e0"/><path d="M2,10 H10 V5" fill="none" stroke="#30d0f0" stroke-width="1"/><circle cx="10" cy="5" r="1" fill="#3a90e0"/><circle cx="2" cy="10.2" r="1.4" fill="#f8d020"/></svg>
<span class="t" style="left:28.9px;top:484.92px;font-size:8.6px;color:#1c1c2c;font-weight:normal;font-style:normal;font-family:'Liberation Sans',sans-serif;transform:scaleX(0.837);">Aligned/Polar References</span>
<svg class="a" style="left:16.3px;top:483.3px;" width="9.5" height="11" viewBox="0 0 12 12" preserveAspectRatio="none"><path d="M2.5,2 L9.5,9.5 M2,10 L6,6" fill="none" stroke="#30c8f0" stroke-width="1"/><circle cx="2.5" cy="2" r="1" fill="#3a90e0"/><circle cx="9.5" cy="9.5" r="1" fill="#3a90e0"/><circle cx="2" cy="11" r="1.4" fill="#f8d020"/></svg>
<span class="t" style="left:28.9px;top:499.12px;font-size:8.6px;color:#1c1c2c;font-weight:normal;font-style:normal;font-family:'Liberation Sans',sans-serif;transform:scaleX(0.849);">Intersection Perpendicular through 3rd Point</span>
<svg class="a" style="left:16.3px;top:497.5px;" width="9.5" height="11" viewBox="0 0 12 12" preserveAspectRatio="none"><path d="M2.5,1 L8.5,7 M8.5,7 L10.5,5" fill="none" stroke="#30c8f0" stroke-width="1"/><circle cx="2.5" cy="1" r="1" fill="#3a90e0"/><circle cx="9.5" cy="8" r="1" fill="#3a90e0"/><circle cx="2" cy="11" r="1.4" fill="#f8d020"/></svg>
<svg class="a" style="left:16.3px;top:219.5px;" width="9.5" height="11" viewBox="0 0 12 12" preserveAspectRatio="none"><path d="M0.6,1 H11.4 V3.5 L8,7 V11 H4 V7 L0.6,3.5Z" fill="#f3e7a2" stroke="#b89640" stroke-width="0.9"/><path d="M1.8,2.2 H10.2 L8.5,4.5 H3.5Z" fill="#ff70d0"/></svg>
<svg class="a" style="left:201.7px;top:219.8px;" width="11" height="10.5" viewBox="0 0 12 12" preserveAspectRatio="none"><path d="M0.6,1 H11.4 V3.5 L8,7 V11 H4 V7 L0.6,3.5Z" fill="#f3e7a2" stroke="#b89640" stroke-width="0.9"/><path d="M1.8,2.2 H10.2 L8.5,4.5 H3.5Z" fill="#ff70d0"/></svg>
<svg class="a" style="left:0;top:0" width="1084" height="509"><path d="M206.7,209.6 L210,213.3 H207.6 V217.1 H211.4 V214.5 L215.4,218.1 L211.4,221.7 V219.1 H202 V221.7 L198,218.1 L202,214.5 V217.1 H205.8 V213.3 H203.4Z" fill="#000" stroke="#fff" stroke-width="0.9" stroke-linejoin="miter"/><path d="M206.3,218.3 V233 L209.9,229.6 L212.9,236.3 L215.4,235.2 L212.5,228.7 H217.6Z" fill="#fff" stroke="#000" stroke-width="0.9" stroke-linejoin="miter"/></svg>
<div class="a" style="left:231px;top:145px;width:14.6px;height:91px;background:#2d333d;border-top-right-radius:3px;border-bottom-right-radius:3px;"></div>
<div class="a" style="left:231px;top:237px;width:14.6px;height:89.5px;background:#363d4a;border-top-right-radius:3px;border-bottom-right-radius:3px;"></div>
<div class="a" style="left:231px;top:327px;width:14.6px;height:91.5px;background:#2d333d;border-top-right-radius:3px;border-bottom-right-radius:3px;"></div>
<div class="a" style="left:231px;top:419px;width:14.6px;height:90px;background:#2d333d;border-top-right-radius:3px;"></div>
<svg class="a" style="left:0;top:0" width="1084" height="509"><text transform="translate(242.3,203.8) rotate(-90)" font-size="9.2" fill="#a9b1bd" font-family="Liberation Sans" textLength="26.5" lengthAdjust="spacingAndGlyphs">System</text></svg>
<svg class="a" style="left:0;top:0" width="1084" height="509"><text transform="translate(242.6,320) rotate(-90)" font-size="9.2" fill="#d0d6de" font-family="Liberation Sans" textLength="76.6" lengthAdjust="spacingAndGlyphs">Cross Section Editor</text></svg>
<svg class="a" style="left:0;top:0" width="1084" height="509"><text transform="translate(242.3,382.7) rotate(-90)" font-size="9.2" fill="#a9b1bd" font-family="Liberation Sans" textLength="19.9" lengthAdjust="spacingAndGlyphs">Tools</text></svg>
<svg class="a" style="left:0;top:0" width="1084" height="509"><text transform="translate(242.3,483) rotate(-90)" font-size="9.2" fill="#a9b1bd" font-family="Liberation Sans" textLength="37.2" lengthAdjust="spacingAndGlyphs">Messages</text></svg>
<svg class="a" style="left:0;top:0" width="1084" height="509"><line x1="615.6" y1="258" x2="615.6" y2="484.6" stroke="#7d7a55" stroke-width="1.3"/><line x1="447.9" y1="351.9" x2="784.2" y2="351.9" stroke="#7d7a55" stroke-width="1.3"/><line x1="615.6" y1="233" x2="615.6" y2="258" stroke="#c8c8c8" stroke-width="1.3"/><path d="M462.9,268.8 H768.7 V296.8 H462.9 Z" fill="none" stroke="#aa3220" stroke-width="1.5"/><path d="M554.4,296.8 V315.2 L569.4,319.4 V474.3 H662.4 V319.4 L676.9,315.2 V296.8" fill="none" stroke="#dc2128" stroke-width="1.5" stroke-linejoin="round"/><circle cx="554.4" cy="315.2" r="1.6" fill="#ff1a1a"/><circle cx="569.4" cy="319.4" r="1.6" fill="#ff1a1a"/><circle cx="662.4" cy="319.4" r="1.6" fill="#ff1a1a"/><circle cx="676.9" cy="315.2" r="1.6" fill="#ff1a1a"/><path d="M615.6,296.8 H638.5 M615.6,296.8 V320" stroke="#e8e8e8" stroke-width="1.1" fill="none"/><path d="M638.5,293.8 L644,296.8 L638.5,299.8 Z" fill="none" stroke="#e8e8e8" stroke-width="1"/><path d="M612.6,320.2 L615.6,325.5 L618.6,320.2 Z" fill="none" stroke="#e8e8e8" stroke-width="1"/><path d="M650.3,290.7 L652.4,293.2 L654.5,290.7 M652.4,293.2 V295.8" fill="none" stroke="#d8d8d8" stroke-width="0.8"/><path d="M615,325.8 H619.5 L615,331.8 H619.8" fill="none" stroke="#d8d8d8" stroke-width="0.8"/><circle cx="615.6" cy="316.2" r="5.5" fill="none" stroke="#7d7a55" stroke-width="1"/><text x="615.6" y="318.8" font-size="6" fill="#7d7a55" font-family="Liberation Sans" text-anchor="middle">SC</text><circle cx="615.6" cy="351.9" r="5" fill="none" stroke="#7d7a55" stroke-width="1"/><circle cx="615.6" cy="351.9" r="2.2" fill="none" stroke="#7d7a55" stroke-width="0.8"/><circle cx="462.9" cy="268.8" r="2.5" fill="#2a3f78" stroke="#2b5cb4" stroke-width="1"/><path d="M461.29999999999995,268.8 H464.5 M462.9,267.2 V270.40000000000003" stroke="#9a3048" stroke-width="0.6"/><circle cx="768.7" cy="268.8" r="2.5" fill="#2a3f78" stroke="#2b5cb4" stroke-width="1"/><path d="M767.1,268.8 H770.3000000000001 M768.7,267.2 V270.40000000000003" stroke="#9a3048" stroke-width="0.6"/><circle cx="462.9" cy="296.8" r="2.5" fill="#2a3f78" stroke="#2b5cb4" stroke-width="1"/><path d="M461.29999999999995,296.8 H464.5 M462.9,295.2 V298.40000000000003" stroke="#9a3048" stroke-width="0.6"/><circle cx="768.7" cy="296.8" r="2.5" fill="#2a3f78" stroke="#2b5cb4" stroke-width="1"/><path d="M767.1,296.8 H770.3000000000001 M768.7,295.2 V298.40000000000003" stroke="#9a3048" stroke-width="0.6"/><circle cx="554.4" cy="296.8" r="2.5" fill="#2a3f78" stroke="#2b5cb4" stroke-width="1"/><path d="M552.8,296.8 H556.0 M554.4,295.2 V298.40000000000003" stroke="#9a3048" stroke-width="0.6"/><circle cx="676.9" cy="296.8" r="2.5" fill="#2a3f78" stroke="#2b5cb4" stroke-width="1"/><path d="M675.3,296.8 H678.5 M676.9,295.2 V298.40000000000003" stroke="#9a3048" stroke-width="0.6"/><circle cx="569.4" cy="474.3" r="2.5" fill="#2a3f78" stroke="#2b5cb4" stroke-width="1"/><path d="M567.8,474.3 H571.0 M569.4,472.7 V475.90000000000003" stroke="#9a3048" stroke-width="0.6"/><circle cx="662.4" cy="474.3" r="2.5" fill="#2a3f78" stroke="#2b5cb4" stroke-width="1"/><path d="M660.8,474.3 H664.0 M662.4,472.7 V475.90000000000003" stroke="#9a3048" stroke-width="0.6"/></svg>
<div class="a" style="left:1020.6px;top:129.4px;width:16.7px;height:17px;background:#f2f2f2;border:1px solid #cfcfcf;border-radius:2px;"></div>
<svg class="a" style="left:1022px;top:131px;" width="14" height="14" viewBox="0 0 14 14" preserveAspectRatio="none"><rect x="1.5" y="1.5" width="11" height="8" rx="1" fill="#fff" stroke="#6a6a6a" stroke-width="1.3"/><path d="M5.5,3.2 L9,5.5 L5.5,7.8Z" fill="#1a9ae8"/><path d="M4,12.5 L7,10 L10,12.5Z" fill="#6a6a6a"/></svg>
<div class="a" style="left:1040px;top:130.2px;width:50px;height:15.3px;background:linear-gradient(#fbfbfb,#e9eef3);border:1px solid #7ec0f4;border-radius:2px;"></div>
<svg class="a" style="left:1049px;top:133.5px;" width="10" height="10" viewBox="0 0 10 10" preserveAspectRatio="none"><path d="M1.5,1.5 L8,8 M8,1.5 L1.5,8" stroke="#8a8a8a" stroke-width="1.5"/></svg>
<span class="t" style="left:1058.5px;top:134.73px;font-size:8px;color:#222;font-weight:normal;font-style:normal;font-family:'Liberation Sans',sans-serif;transform:scaleX(0.905);">Close</span>
<svg class="a" style="left:0;top:0" width="1084" height="509"><circle cx="1040.2" cy="190" r="35.7" fill="none" stroke="#42474f" stroke-width="8.6"/><rect x="1026" y="175" width="29.2" height="30.2" fill="#9b9b9b"/><rect x="1031.3" y="181.3" width="18.6" height="17.7" fill="#9ea2a8"/><text x="1027.2" y="193.2" font-size="8.8" fill="#4e4e50" font-weight="bold" font-family="Liberation Sans" textLength="27" lengthAdjust="spacingAndGlyphs">BOTTOM</text><text x="1036.6" y="157" font-size="11.5" fill="#b6b6b6" font-weight="bold" font-family="Liberation Sans" textLength="8" lengthAdjust="spacingAndGlyphs">N</text><text x="1036.4" y="233.3" font-size="13.5" fill="#b6b6b6" font-weight="bold" font-family="Liberation Sans" textLength="8.4" lengthAdjust="spacingAndGlyphs">S</text><text transform="translate(1007,195.4) scale(-1,1)" x="0" y="0" font-size="14" fill="#b6b6b6" font-weight="bold" font-family="Liberation Sans" textLength="8.5" lengthAdjust="spacingAndGlyphs">E</text><text x="1071" y="195.4" font-size="14" fill="#b6b6b6" font-weight="bold" font-family="Liberation Sans" textLength="14" lengthAdjust="spacingAndGlyphs">W</text><rect x="1034" y="242" width="12.7" height="5" rx="1" fill="#505359"/><text x="1035" y="246.6" font-size="5" fill="#8a8d92" font-family="Liberation Sans" textLength="10.5" lengthAdjust="spacingAndGlyphs">WCS</text><rect x="997" y="249.2" width="85.8" height="11" rx="2.8" fill="#9c9fa9"/><text x="999.5" y="258.3" font-size="9" fill="#5c5f68" font-family="Liberation Sans" textLength="70.5" lengthAdjust="spacingAndGlyphs">ASO_G_CROSSMAX</text><path d="M1074.5,253.5 L1077,255.5 L1079.5,253.5" fill="none" stroke="#b4b6bc" stroke-width="0.8"/></svg>
<svg class="a" style="left:0;top:0" width="1084" height="509"><g transform="translate(1.2,0)"><rect x="1062.5" y="280.5" width="25" height="146.5" rx="2" fill="#50565f" stroke="#60666e" stroke-width="1"/><circle cx="1082" cy="284" r="2" fill="none" stroke="#3b4149" stroke-width="0.8"/><circle cx="1082" cy="423.5" r="2" fill="none" stroke="#3b4149" stroke-width="0.8"/><circle cx="1073.5" cy="300" r="9" fill="none" stroke="#3b4149" stroke-width="1.3"/><circle cx="1073.5" cy="300" r="5" fill="none" stroke="#3b4149" stroke-width="1.3"/><path d="M1072,314 L1074,316 L1076,314Z" fill="#3b4149"/><path d="M1068,336 C1066,331 1066,326 1068,322 M1071,330 V319 M1074,330 V318 M1077,330 V319 M1080,330 V322 C1081,328 1078,334 1074,336 Z" fill="none" stroke="#3b4149" stroke-width="1.2"/><path d="M1066,342 L1076,353 M1076,342 L1066,353" stroke="#3b4149" stroke-width="1"/><circle cx="1076" cy="353" r="3.2" fill="none" stroke="#3b4149" stroke-width="1.2"/><path d="M1078,355 L1082,359" stroke="#3b4149" stroke-width="1.5"/><path d="M1072,363 L1074,365 L1076,363Z" fill="#3b4149"/><path d="M1074,368 V392 M1071,371 L1074,368 L1077,371 M1066,381 C1066,385 1082,385 1082,381 C1082,377 1066,377 1066,381" fill="none" stroke="#3b4149" stroke-width="1.2"/><path d="M1072,390 L1074,392 L1076,390Z" fill="#3b4149"/><rect x="1064.5" y="398" width="5" height="4" fill="none" stroke="#3b4149" stroke-width="0.9"/><rect x="1071" y="398" width="5" height="4" fill="none" stroke="#3b4149" stroke-width="0.9"/><rect x="1077.5" y="398" width="5" height="4" fill="none" stroke="#3b4149" stroke-width="0.9"/><rect x="1065" y="405" width="11" height="10" fill="none" stroke="#3b4149" stroke-width="1"/><path d="M1068.5,407.5 L1073,410 L1068.5,412.5Z" fill="#3b4149"/></g></svg>
<svg class="a" style="left:0;top:0" width="1084" height="509"><path d="M2.6,3.5 Q2.6,2 4,2 H16.8 V14.9 H4 L2.6,16 Z" fill="#e3154b"/><path d="M6.5,13 L9.5,4.5 H10.8 L13.8,13 H11.9 L11.2,11 H9.1 L8.4,13Z M9.6,9.4 H10.7 L10.15,7.5Z" fill="#fff"/><rect x="16.8" y="3.9" width="14.2" height="9.7" fill="#8a0f2e"/><text x="18.3" y="11.3" font-size="6.3" font-weight="bold" fill="#f0d8de" font-family="Liberation Sans" textLength="11.3" lengthAdjust="spacingAndGlyphs">CAD</text><path d="M37,3.7 H46 L49,6.7 V12.5 H37Z" fill="#dcdcdc"/><path d="M46,3.7 V6.7 H49" fill="#aaa"/><path d="M54,4 H58 L59,5 H64 V7 H57 L54,12.5Z" fill="#bdbdbd"/><path d="M56.5,7 H66 L63.5,12.5 H54Z" fill="#dcdcdc"/><path d="M71,2.5 H83 V14 H71Z" fill="#bcbcbc"/><rect x="73.5" y="3.3" width="7" height="3.5" fill="#f0f0f0"/><rect x="73.5" y="9.5" width="7" height="4.5" fill="#f0f0f0"/><rect x="74.5" y="10.5" width="2" height="2.5" fill="#888"/><path d="M88,2.5 H99.5 V11 H96 L94,14 H88Z" fill="#bcbcbc"/><rect x="90.5" y="3.3" width="6.5" height="3.5" fill="#f0f0f0"/><path d="M94.5,14.5 L99,9.5 L100.5,10.8 L96,15.5Z" fill="#f0c030"/><path d="M99,9.5 L100,8.3 L101.5,9.6 L100.5,10.8Z" fill="#e03030"/><rect x="105.6" y="2" width="6.5" height="12" rx="1" fill="#888"/><rect x="106.6" y="3" width="4.5" height="9" fill="#6a6a6a"/><path d="M110,10 H113 L114,11 H117 V14.5 H110Z" fill="#f0c040"/><rect x="124.5" y="2" width="6.5" height="12" rx="1" fill="#888"/><rect x="125.5" y="3" width="4.5" height="9" fill="#6a6a6a"/><path d="M120,7 H126 M124,5 L126.5,7 L124,9" stroke="#4ab0f0" stroke-width="1.4" fill="none"/><rect x="139.5" y="5.5" width="12" height="5" rx="1" fill="#dcdcdc"/><rect x="141.5" y="2" width="8" height="4" fill="#f4f4f4"/><rect x="141.5" y="9" width="8" height="4.5" fill="#f4f4f4"/><rect x="142.5" y="11" width="6" height="2" fill="#4ab0f0"/><path d="M157,8 L161.5,4 V6.3 C165,6.3 168.5,7.5 168.5,12 C167,9.5 164.5,9.3 161.5,9.3 V11.8Z" fill="#dcdcdc"/><path d="M172.8,6.3 L177.2,6.3 L175,8.7Z" fill="#d8d8d8"/><path d="M193.7,8 L189.2,4 V6.3 C185.7,6.3 182.2,7.5 182.2,12 C183.7,9.5 186.2,9.3 189.2,9.3 V11.8Z" fill="#6a6e74"/><path d="M197.8,6.3 L202.2,6.3 L200,8.7Z" fill="#9a9ea4"/><rect x="207.5" y="1.8" width="12.4" height="11.5" fill="#fafafa"/><path d="M209.5,8 L213.5,4.5 L218.5,7 L214.5,10.5Z" fill="#2a90e0"/><path d="M222.8,6.3 L227.2,6.3 L225,8.7Z" fill="#d8d8d8"/><rect x="232.4" y="3.5" width="6.5" height="1.2" fill="#d8d8d8"/><path d="M233.4,6.3 L237.79999999999998,6.3 L235.6,8.7Z" fill="#d8d8d8"/><path d="M244.8,7.5 L256.4,2.5 L252.5,13.5 L250,9.5Z M250,9.5 L256.4,2.5" fill="#4aa8e8" stroke="#222832" stroke-width="0.5"/><path d="M681,4.5 L684,7.3 L681,10Z" fill="#d0d0d0"/><circle cx="821.5" cy="7" r="4" fill="none" stroke="#c8c8c8" stroke-width="1.3"/><path d="M824.5,10 L827.6,13.2" stroke="#d09a40" stroke-width="1.6"/><circle cx="839" cy="5" r="3.3" fill="#5cb4ea"/><path d="M832.8,14.5 C832.8,10 835.5,9 839,9 C842.5,9 845.5,10 845.5,14.5Z" fill="#5cb4ea"/><path d="M908.8,6.8 L913.2,6.8 L911,9.2Z" fill="#d8d8d8"/><path d="M921,4 H922.8 L924.5,11 H930 L931.2,6 H923.5" fill="none" stroke="#a0a4aa" stroke-width="1.3"/><circle cx="925" cy="13" r="1" fill="#a0a4aa"/><circle cx="929" cy="13" r="1" fill="#a0a4aa"/><path d="M942.4,3.5 L947.5,12 H937.3Z" fill="none" stroke="#d8d8d8" stroke-width="1.6"/><path d="M952.0999999999999,6.8 L956.5,6.8 L954.3,9.2Z" fill="#d8d8d8"/><rect x="963" y="2" width="1" height="13" fill="#3e444c"/><circle cx="975.6" cy="8.2" r="5.6" fill="#d0d0d0"/><text x="975.6" y="11.6" font-size="9" font-weight="bold" fill="#222832" font-family="Liberation Sans" text-anchor="middle">?</text><path d="M986.3,6.8 L990.7,6.8 L988.5,9.2Z" fill="#d8d8d8"/><rect x="1041.4" y="9.8" width="5.6" height="1.5" fill="#e0e0e0"/><rect x="1058.4" y="3.8" width="8.2" height="6.8" fill="none" stroke="#e0e0e0" stroke-width="1.2"/><rect x="1058.4" y="3.5" width="8.2" height="1.6" fill="#e0e0e0"/><path d="M1075.5,3.5 L1083,11 M1083,3.5 L1075.5,11" stroke="#e0e0e0" stroke-width="1.3"/><rect x="700.4" y="25.5" width="7.5" height="4" fill="#f0f0f0"/><rect x="702.5" y="27" width="3" height="1" fill="#444"/><path d="M708.3,26.6 L712.7,26.6 L710.5,29.0Z" fill="#d8d8d8"/><path d="M8.1,45.2 L14,39.3 H31 L25.5,45.2Z" fill="#f2f2f2"/><rect x="8.1" y="45.2" width="17.4" height="16.8" fill="#dadada"/><path d="M25.5,45.2 L31,39.3 V56.5 L25.5,62Z" fill="#bfbfbf"/><path d="M17.1,79.3 L21.5,79.3 L19.3,81.7Z" fill="#d8d8d8"/><path d="M45,44.1 L49.5,39.2 H63 L58.8,44.1Z" fill="#b8dcf8"/><rect x="45" y="44.1" width="13.8" height="14.9" fill="#8ccbf7"/><path d="M58.8,44.1 L63,39.2 V54.5 L58.8,59Z" fill="#5aa6e6"/><path d="M45,59 H58.8 L63,54.5 V57.8 L58.8,62.2 H45Z" fill="#ececec"/><path d="M65.5,57.2 V41.5" stroke="#f0f0f0" stroke-width="0.9"/><path d="M63.7,42.6 L65.5,39.6 L67.3,42.6Z" fill="#f0f0f0"/><path d="M54.5,79.3 L58.900000000000006,79.3 L56.7,81.7Z" fill="#d8d8d8"/><path d="M82,44 L84,41 H92.8 V48.5 L85,48.5 L83.5,51.4 H82Z" fill="#d8d8d8"/><path d="M82,44 L84,41 V48.5 L82,51.4Z" fill="#f4f4f4"/><path d="M83.5,61 L87,59 H92 L89.5,62Z" fill="#b8dcf8"/><rect x="83.5" y="61" width="7" height="7" fill="#8ccbf7"/><path d="M90.5,61 L92.5,59 V66 L90.5,68Z" fill="#5aa6e6"/><path d="M82.2,69.5 H93" stroke="#d0d0d0" stroke-width="0.6"/><path d="M87.5,59 V56.5 M86.3,57.7 L87.5,56.3 L88.7,57.7" stroke="#e8e8e8" stroke-width="0.7" fill="none"/><circle cx="154.1" cy="49.9" r="11.2" fill="#e6cc78"/><path d="M143.5,46 Q154,42 164.7,46 M143,52 Q154,49 165.2,52 M145.5,57 Q154,55 162.5,57 M150,39.5 Q148,50 150,60.5 M158,39.5 Q160,50 158,60.5" stroke="#c0a24a" stroke-width="0.7" fill="none"/><path d="M146,44 Q154,41.5 162,44 L162,50 Q154,48 146,50Z" fill="#f2dc98" opacity="0.7"/><circle cx="179.8" cy="45.2" r="5.5" fill="#e2c46a"/><path d="M174.8,43.7 Q179.8,42.2 184.8,43.7 M177.5,40.2 Q176.5,45.2 177.5,50.2" stroke="#b89a40" stroke-width="0.5" fill="none"/><path d="M181,47.5 H187 M184,44.5 V50.5" stroke="#38c050" stroke-width="2"/><circle cx="179.8" cy="62.9" r="5.5" fill="#e2c46a"/><path d="M174.8,61.4 Q179.8,59.9 184.8,61.4 M177.5,57.9 Q176.5,62.9 177.5,67.9" stroke="#b89a40" stroke-width="0.5" fill="none"/><path d="M180.5,65.5 H186.5" stroke="#e03838" stroke-width="1.8"/><circle cx="179.8" cy="80.6" r="5.5" fill="#e2c46a"/><path d="M174.8,79.1 Q179.8,77.6 184.8,79.1 M177.5,75.6 Q176.5,80.6 177.5,85.6" stroke="#b89a40" stroke-width="0.5" fill="none"/><path d="M174.5,86 L185,75" stroke="#a0a0a0" stroke-width="1"/><path d="M185,97 L188,100 M188,97.5 V100 H185.5" stroke="#c8c8c8" stroke-width="0.7" fill="none"/><path d="M195.3,45 L197.3,43 H201.3 L203.3,40 H207.3 V46 L205.3,48 H201.3 L199.3,51 H195.3Z" fill="#8ccbf7"/><path d="M203.3,40 H207.3 L205.3,42 H201.3Z" fill="#b8dcf8"/><rect x="214.8" y="40" width="8" height="8" fill="#d8d8d8"/><rect x="218.8" y="44" width="8" height="8" fill="#c8c8c8"/><rect x="218.8" y="44" width="4" height="4" fill="#e03838"/><path d="M234.4,44 L237.4,41 H245.4 V48 L242.4,51 H234.4Z M234.4,44 H242.4 V51 M242.4,44 L245.4,41" fill="none" stroke="#4ba8ea" stroke-width="1.2"/><path d="M236.9,49 L239.9,46" stroke="#ddd" stroke-width="0.7"/><path d="M250.20000000000002,44.8 L254.6,44.8 L252.4,47.2Z" fill="#d8d8d8"/><rect x="199.3" y="57.6" width="8" height="8" fill="#dadada"/><path d="M195.3,62.6 H200.3 V68.6 H195.3Z" fill="#8ccbf7"/><rect x="215.8" y="57.6" width="11" height="5.5" fill="#8ccbf7"/><rect x="215.8" y="63.6" width="11" height="5.5" fill="#dadada"/><rect x="233.4" y="58.6" width="3" height="10" fill="#dadada"/><rect x="236.4" y="58.6" width="4" height="10" fill="#8ccbf7"/><path d="M241.4,63.6 H245.4 M243.9,62.1 L245.4,63.6 L243.9,65.1" stroke="#ddd" stroke-width="0.9" fill="none"/><path d="M250.20000000000002,62.4 L254.6,62.4 L252.4,64.8Z" fill="#d8d8d8"/><rect x="199.3" y="75.3" width="8" height="8" fill="#dadada"/><rect x="195.3" y="79.3" width="8" height="8" fill="#dadada" stroke="#3b4453" stroke-width="0.8"/><rect x="199.3" y="79.3" width="4" height="4" fill="#8ccbf7"/><path d="M214.8,82.3 L221.8,76.3 L226.8,79.3 L219.8,85.3Z" fill="#dadada"/><path d="M214.8,82.3 L219.8,85.3 L226.8,79.3 V81.3 L219.8,87.3 L214.8,84.3Z" fill="#8ccbf7"/><rect x="234.4" y="76.3" width="4.5" height="10" fill="#dadada"/><rect x="239.9" y="76.3" width="4.5" height="10" fill="#8ccbf7"/><path d="M239.4,75.3 V87.3" stroke="#5aa6e6" stroke-width="1"/><path d="M250.20000000000002,80.1 L254.6,80.1 L252.4,82.5Z" fill="#d8d8d8"/><path d="M262,51 H268 C274,51 274,44 268,44" fill="none" stroke="#c6cad0" stroke-width="0.9"/><circle cx="263" cy="51" r="1.2" fill="#4ba8ea"/><circle cx="268" cy="51" r="1.2" fill="#4ba8ea"/><circle cx="268" cy="44" r="1.2" fill="#4ba8ea"/><path d="M279.4,50 L282.4,47 H291.4 L288.4,50Z" fill="#e0e0e0"/><path d="M284.4,48.5 V41 H289.4" stroke="#c6cad0" stroke-width="0.9" fill="none"/><circle cx="284.4" cy="48.5" r="1.2" fill="#4ba8ea"/><circle cx="284.4" cy="41" r="1.2" fill="#4ba8ea"/><circle cx="289.4" cy="41" r="1.2" fill="#4ba8ea"/><path d="M300.6,51 C301.6,45 305.6,41 310.6,41" fill="none" stroke="#c6cad0" stroke-width="0.9"/><circle cx="300.6" cy="51" r="1.2" fill="#4ba8ea"/><circle cx="304.1" cy="44" r="1.2" fill="#4ba8ea"/><circle cx="310.6" cy="41" r="1.2" fill="#4ba8ea"/><path d="M316.1,44.8 L320.5,44.8 L318.3,47.2Z" fill="#d8d8d8"/><path d="M263,68.5 C263,60.5 266,60.5 268,65.5 C270,69.5 273,63.5 273,58.5" fill="none" stroke="#c6cad0" stroke-width="0.9"/><circle cx="263" cy="68.5" r="1.2" fill="#4ba8ea"/><circle cx="268" cy="65.5" r="1.2" fill="#4ba8ea"/><circle cx="273" cy="58.5" r="1.2" fill="#4ba8ea"/><path d="M280.4,68.5 L290.4,58.5" stroke="#c6cad0" stroke-width="0.9"/><circle cx="280.4" cy="68.5" r="1.2" fill="#4ba8ea"/><circle cx="290.4" cy="58.5" r="1.2" fill="#4ba8ea"/><circle cx="305.6" cy="63.5" r="5.5" fill="none" stroke="#c6cad0" stroke-width="0.9"/><path d="M305.6,63.5 L309.1,60.0" stroke="#c6cad0" stroke-width="0.7"/><circle cx="305.6" cy="63.5" r="1.2" fill="#4ba8ea"/><circle cx="309.1" cy="60.0" r="1.2" fill="#4ba8ea"/><path d="M316.1,62.3 L320.5,62.3 L318.3,64.7Z" fill="#d8d8d8"/><path d="M268,75.5 L273.5,79.5 L271.5,86 H264.5 L262.5,79.5Z" fill="none" stroke="#c6cad0" stroke-width="0.9"/><circle cx="268" cy="81" r="1.2" fill="#4ba8ea"/><circle cx="271.5" cy="86" r="1.2" fill="#4ba8ea"/><rect x="279.9" y="77" width="11" height="8" fill="none" stroke="#c6cad0" stroke-width="0.9"/><circle cx="279.9" cy="77" r="1.2" fill="#4ba8ea"/><circle cx="290.9" cy="85" r="1.2" fill="#4ba8ea"/><ellipse cx="305.6" cy="81" rx="5.8" ry="4.5" fill="none" stroke="#c6cad0" stroke-width="0.9"/><circle cx="305.6" cy="81" r="1.2" fill="#4ba8ea"/><circle cx="311.40000000000003" cy="81" r="1.2" fill="#4ba8ea"/><path d="M316.1,79.8 L320.5,79.8 L318.3,82.2Z" fill="#d8d8d8"/><rect x="328.6" y="42" width="5" height="9" rx="1" fill="#dadada"/><rect x="334.6" y="42" width="5" height="9" rx="1" fill="#8ccbf7"/><path d="M334.1,40 V52" stroke="#9aa" stroke-width="1"/><path d="M354.2,41 L359.2,50 H349.2Z" fill="none" stroke="#c6cad0" stroke-width="0.8"/><circle cx="354.2" cy="46.5" r="3" fill="none" stroke="#a0a0a0" stroke-width="0.7"/><circle cx="354.2" cy="41" r="1.3" fill="#4ba8ea"/><circle cx="349.7" cy="50" r="1.3" fill="none" stroke="#30c040"/><circle cx="358.7" cy="50" r="1.3" fill="none" stroke="#e04040"/><path d="M371.6,40 V52 M365.6,46 H377.6 M369.6,42 L371.6,40 L373.6,42 M369.6,50 L371.6,52 L373.6,50 M367.6,44 L365.6,46 L367.6,48 M375.6,44 L377.6,46 L375.6,48" stroke="#f0f0f0" stroke-width="1.3" fill="none"/><circle cx="387.7" cy="42.5" r="2" fill="none" stroke="#c6cad0" stroke-width="0.8"/><rect x="390.2" y="40.5" width="4" height="3" fill="none" stroke="#c6cad0" stroke-width="0.8"/><circle cx="388.2" cy="49" r="2.5" fill="none" stroke="#4ba8ea" stroke-width="1"/><circle cx="393.2" cy="49" r="2.5" fill="none" stroke="#4ba8ea" stroke-width="1"/><path d="M401.8,40 H413.8 M404.8,41 L410.8,48 M410.8,41 L404.8,48" stroke="#d8d8d8" stroke-width="1.1"/><circle cx="404.8" cy="50" r="2" fill="none" stroke="#d8d8d8"/><circle cx="410.8" cy="50" r="2" fill="none" stroke="#d8d8d8"/><path d="M419.3,44.8 L423.7,44.8 L421.5,47.2Z" fill="#d8d8d8"/><path d="M329.6,64.5 H340.6 V69.5 H329.6Z" fill="#dadada"/><path d="M330.6,64.5 V59.5 L332.6,57.5 V64.5" fill="#e8e8e8"/><rect x="331.6" y="60.5" width="6" height="5" fill="#8ccbf7"/><circle cx="354.2" cy="63.5" r="5.5" fill="none" stroke="#30b050" stroke-width="0.9"/><circle cx="354.2" cy="63.5" r="3.8" fill="none" stroke="#d04050" stroke-width="0.9"/><circle cx="354.2" cy="63.5" r="2.2" fill="none" stroke="#4ba8ea" stroke-width="0.9"/><path d="M375.6,59.5 A5,5 0 1 1 371.6,58.5" fill="none" stroke="#c6cad0" stroke-width="1"/><path d="M371.6,57.0 L374.1,58.7 L371.6,60.5Z" fill="#c6cad0"/><path d="M386.2,57.5 H391.2 V69.5 H386.2Z M391.2,57.5 H393.2 L397.2,69.5 H391.2" fill="none" stroke="#c6cad0" stroke-width="0.9"/><path d="M391.2,66.5 H394.2" stroke="#f0f0f0" stroke-width="0.8"/><path d="M402.8,69.5 V63.5 C402.8,60.5 404.8,58.5 407.8,58.5 H412.8" fill="none" stroke="#4ba8ea" stroke-width="1"/><path d="M402.8,69.5 V64.5" stroke="#c6cad0" stroke-width="1"/><path d="M419.3,62.3 L423.7,62.3 L421.5,64.7Z" fill="#d8d8d8"/><path d="M328.6,86 L336.6,78 L338.6,75 L339.6,76 L337.6,79 L330.6,86Z" fill="#f0c040"/><circle cx="330.1" cy="85.5" r="1.5" fill="#e03838"/><path d="M331.6,87 H339.6" stroke="#4ba8ea" stroke-width="0.8"/><path d="M354.2,76 L359.2,85 H349.2Z" fill="none" stroke="#c6cad0" stroke-width="0.8"/><circle cx="354.2" cy="81.5" r="3" fill="none" stroke="#a0a0a0" stroke-width="0.7"/><circle cx="354.2" cy="76" r="1.3" fill="#4ba8ea"/><circle cx="349.7" cy="85" r="1.3" fill="none" stroke="#30c040"/><circle cx="358.7" cy="85" r="1.3" fill="none" stroke="#e04040"/><rect x="366.1" y="75.5" width="11" height="11" fill="none" stroke="#4ba8ea" stroke-width="0.9"/><rect x="366.1" y="80.5" width="6" height="6" fill="none" stroke="#c6cad0" stroke-width="0.9"/><path d="M397.2,77 H390.2 C386.2,77 386.2,85 390.2,85 H397.2 M397.2,79.5 H391.2 C389.2,79.5 389.2,82.5 391.2,82.5 H397.2" fill="none" stroke="#4ba8ea" stroke-width="0.9"/><rect x="402.3" y="75.5" width="4.5" height="4.5" fill="none" stroke="#c6cad0" stroke-width="0.9"/><rect x="408.8" y="75.5" width="4.5" height="4.5" fill="none" stroke="#4ba8ea" stroke-width="0.9"/><rect x="402.3" y="82" width="4.5" height="4.5" fill="none" stroke="#4ba8ea" stroke-width="0.9"/><rect x="408.8" y="82" width="4.5" height="4.5" fill="none" stroke="#4ba8ea" stroke-width="0.9"/><path d="M419.3,79.8 L423.7,79.8 L421.5,82.2Z" fill="#d8d8d8"/><path d="M444.1,48 L447,45.2 H458 L456.4,48Z" fill="#f4f4f4"/><rect x="444.1" y="48" width="12.3" height="8.4" fill="#dedede"/><path d="M455.7,45 L465.4,39.7 V57.5 L455.7,62.4Z" fill="#f0f0f0"/><path d="M457.5,45.8 L463.8,42.5 V56.5 L457.5,59.8Z" fill="#8ccbf7"/><path d="M464.0,97.8 L468.4,97.8 L466.2,100.2Z" fill="#d8d8d8"/><path d="M475,97 L478,100 M478,97.5 V100 H475.5" stroke="#c8c8c8" stroke-width="0.7" fill="none"/><path d="M87.8,97.6 L92.2,97.6 L90,100.0Z" fill="#d8d8d8"/><path d="M248.10000000000002,97.6 L252.5,97.6 L250.3,100.0Z" fill="#d8d8d8"/><path d="M301.3,97.6 L305.7,97.6 L303.5,100.0Z" fill="#d8d8d8"/><path d="M389.3,97.6 L393.7,97.6 L391.5,100.0Z" fill="#d8d8d8"/><path d="M639.1999999999999,97.6 L643.6,97.6 L641.4,100.0Z" fill="#d8d8d8"/><path d="M906.4,97.6 L910.8000000000001,97.6 L908.6,100.0Z" fill="#d8d8d8"/><path d="M1028.6,97.6 L1033.0,97.6 L1030.8,100.0Z" fill="#d8d8d8"/><path d="M1066.8,97.6 L1071.2,97.6 L1069,100.0Z" fill="#d8d8d8"/><path d="M578.5,97 L581.5,100 M581.5,97.5 V100 H579" stroke="#c8c8c8" stroke-width="0.7" fill="none"/><path d="M1077.5,97 L1080.5,100 M1080.5,97.5 V100 H1078" stroke="#c8c8c8" stroke-width="0.7" fill="none"/><path d="M487.8,40 V50.5 H497.3" fill="none" stroke="#d0d0d0" stroke-width="0.9"/><path d="M486.5,41.5 L487.8,40 L489.1,41.5 M495.8,49.2 L497.3,50.5 L495.8,51.8" fill="none" stroke="#d0d0d0" stroke-width="0.8"/><circle cx="492.3" cy="44" r="2.5" fill="#40d8e8"/><path d="M515.9,40 V50.5 H525.4" fill="none" stroke="#d0d0d0" stroke-width="0.9"/><path d="M514.6,41.5 L515.9,40 L517.1999999999999,41.5 M523.9,49.2 L525.4,50.5 L523.9,51.8" fill="none" stroke="#d0d0d0" stroke-width="0.8"/><rect x="518.4" y="40.5" width="6" height="7" fill="#d0d0d0"/><rect x="519.4" y="41.5" width="4" height="2" fill="#3b4453"/><path d="M534.9,40 V50.5 H544.4" fill="none" stroke="#d0d0d0" stroke-width="0.9"/><path d="M533.6,41.5 L534.9,40 L536.1999999999999,41.5 M542.9,49.2 L544.4,50.5 L542.9,51.8" fill="none" stroke="#d0d0d0" stroke-width="0.8"/><path d="M535.9,49.5 L541.4,44" stroke="#d0d0d0" stroke-width="0.8"/><path d="M540.4,43 L542.4,45" stroke="#d0d0d0" stroke-width="0.8"/><path d="M552.8,40 V50.5 H562.3" fill="none" stroke="#d0d0d0" stroke-width="0.9"/><path d="M551.5,41.5 L552.8,40 L554.0999999999999,41.5 M560.8,49.2 L562.3,50.5 L560.8,51.8" fill="none" stroke="#d0d0d0" stroke-width="0.8"/><rect x="555.3" y="41.5" width="7" height="5" fill="#d0d0d0"/><rect x="556.3" y="43" width="5" height="2" fill="#3b4453"/><path d="M569.7,40 V50.5 H579.2" fill="none" stroke="#d0d0d0" stroke-width="0.9"/><path d="M568.4000000000001,41.5 L569.7,40 L571.0,41.5 M577.7,49.2 L579.2,50.5 L577.7,51.8" fill="none" stroke="#d0d0d0" stroke-width="0.8"/><circle cx="575.2" cy="44" r="3" fill="#4aa8e8"/><path d="M573.2,43 L576.2,45" stroke="#ddd" stroke-width="0.6"/><path d="M501.3,44.8 L505.7,44.8 L503.5,47.2Z" fill="#d8d8d8"/><path d="M487.8,57.9 V68.4 H497.3" fill="none" stroke="#d0d0d0" stroke-width="0.9"/><path d="M486.5,59.4 L487.8,57.9 L489.1,59.4 M495.8,67.1 L497.3,68.4 L495.8,69.7" fill="none" stroke="#d0d0d0" stroke-width="0.8"/><circle cx="491.3" cy="62.9" r="2.8" fill="none" stroke="#d0d0d0" stroke-width="0.8"/><text x="494.3" y="60.9" font-size="4.5" fill="#4ba8ea" font-family="Liberation Sans">x</text><path d="M515.9,57.9 V68.4 H525.4" fill="none" stroke="#d0d0d0" stroke-width="0.9"/><path d="M514.6,59.4 L515.9,57.9 L517.1999999999999,59.4 M523.9,67.1 L525.4,68.4 L523.9,69.7" fill="none" stroke="#d0d0d0" stroke-width="0.8"/><path d="M524.4,62.9 C522.4,59.9 519.4,59.9 518.4,61.9" fill="none" stroke="#4ba8ea" stroke-width="1.2"/><path d="M517.4,60.4 L518.4,62.9 L520.4,61.4" fill="#4ba8ea"/><path d="M534.9,57.9 V68.4 H544.4" fill="none" stroke="#d0d0d0" stroke-width="0.9"/><path d="M533.6,59.4 L534.9,57.9 L536.1999999999999,59.4 M542.9,67.1 L544.4,68.4 L542.9,69.7" fill="none" stroke="#d0d0d0" stroke-width="0.8"/><path d="M536.4,66.9 L541.4,61.9" stroke="#d0d0d0" stroke-width="0.8"/><circle cx="535.4" cy="67.9" r="1" fill="#4ba8ea"/><path d="M552.8,57.9 V68.4 H562.3" fill="none" stroke="#d0d0d0" stroke-width="0.9"/><path d="M551.5,59.4 L552.8,57.9 L554.0999999999999,59.4 M560.8,67.1 L562.3,68.4 L560.8,69.7" fill="none" stroke="#d0d0d0" stroke-width="0.8"/><text x="555.8" y="65.9" font-size="8" fill="#4ba8ea" font-family="Liberation Sans">Z</text><path d="M569.7,57.9 V68.4 H579.2" fill="none" stroke="#d0d0d0" stroke-width="0.9"/><path d="M568.4000000000001,59.4 L569.7,57.9 L571.0,59.4 M577.7,67.1 L579.2,68.4 L577.7,69.7" fill="none" stroke="#d0d0d0" stroke-width="0.8"/><text x="573.2" y="66.9" font-size="8" fill="#4ba8ea" font-family="Liberation Sans">3</text><path d="M501.3,62.699999999999996 L505.7,62.699999999999996 L503.5,65.1Z" fill="#d8d8d8"/><path d="M487.8,75.1 V85.6 H497.3" fill="none" stroke="#d0d0d0" stroke-width="0.9"/><path d="M486.5,76.6 L487.8,75.1 L489.1,76.6 M495.8,84.3 L497.3,85.6 L495.8,86.89999999999999" fill="none" stroke="#d0d0d0" stroke-width="0.8"/><rect x="489.3" y="77.1" width="7" height="7" fill="none" stroke="#d0d0d0" stroke-width="0.8"/><path d="M491.3,77.1 V84.1 M494.3,77.1 V84.1 M489.3,80.1 H496.3" stroke="#d0d0d0" stroke-width="0.5"/><path d="M501.3,79.89999999999999 L505.7,79.89999999999999 L503.5,82.3Z" fill="#d8d8d8"/><rect x="512.9" y="74" width="69.1" height="14.1" fill="#4a5362"/><path d="M576.0,80.0 L580.4000000000001,80.0 L578.2,82.4Z" fill="#e0e0e0"/><rect x="586.4" y="39" width="86.6" height="14.9" fill="#4b5463" stroke="#2e343e" stroke-width="0.8"/><rect x="587.6" y="40" width="11.9" height="12.9" fill="#0a0a0a"/><circle cx="592" cy="47.5" r="3.3" fill="none" stroke="#d8d8d8" stroke-width="0.7"/><circle cx="594.5" cy="45" r="3.3" fill="none" stroke="#d8d8d8" stroke-width="0.7"/><path d="M666.3,45.3 L670.7,45.3 L668.5,47.7Z" fill="#e8e8e8"/><rect x="586.4" y="56.9" width="86.6" height="14" fill="#4b5463" stroke="#2e343e" stroke-width="0.8"/><rect x="587.6" y="57.8" width="12" height="12" fill="#b8b8b8"/><rect x="589" y="60.5" width="9" height="8" fill="#6a6e74"/><path d="M589,62.5 H598 M589,64.5 H598" stroke="#b8b8b8" stroke-width="0.6"/><path d="M666.3,62.8 L670.7,62.8 L668.5,65.2Z" fill="#e8e8e8"/><rect x="589" y="75.5" width="10.5" height="10" fill="none" stroke="#d0d0d0" stroke-width="1.2"/><circle cx="594.2" cy="80.5" r="3" fill="#4ab0f0"/><path d="M603.3,79.8 L607.7,79.8 L605.5,82.2Z" fill="#d8d8d8"/><rect x="677.5" y="37.8" width="30" height="50.2" rx="1.5" fill="#47556b" stroke="#5e92c8" stroke-width="0.9"/><path d="M681,45.5 H697 V61.5 H681Z M681,45.5 L688.5,39 H704.5 L697,45.5 M704.5,39 V54.5 L697,61.5" fill="none" stroke="#5ab4ec" stroke-width="0.7"/><path d="M686.3,45.5 V61.5 M691.6,45.5 V61.5 M681,50.8 H697 M681,56.1 H697 M683.5,43.3 H699.5 M686,41.2 H702 M693.8,39 L686.3,45.5 M699.2,39 L691.6,45.5 M697,50.8 L704.5,44.3 M697,56.1 L704.5,49.6 M699.5,43.3 V59.3 M702,41.2 V57.2" fill="none" stroke="#5ab4ec" stroke-width="0.45"/><path d="M681,61.5 L704.5,39 V54.5 L697,61.5Z" fill="#e4e4e4"/><path d="M697,61.5 L704.5,54.5 V39 L697,46" fill="#cfcfcf"/><path d="M681,61.5 L704.5,39 V54.5 L697,61.5Z" fill="#e6e6e6" opacity="0.5"/><path d="M686.3,56.5 V61.5 M691.6,51.5 V61.5 M686,56.1 H697 M691.5,50.8 H697 M697,50.8 L704.5,44.3 M697,56.1 L704.5,49.6 M699.5,43.3 V59.3 M702,41.2 V57.2" fill="none" stroke="#b4b4b4" stroke-width="0.5"/><path d="M721,43.5 L724,39.6 H743.4 L740,43.5Z" fill="#f0f0f0"/><rect x="721" y="43.5" width="19" height="18.4" fill="#8ccbf7"/><rect x="721" y="43.5" width="19" height="2" fill="#2a88d0"/><path d="M740,43.5 L743.4,39.6 V58 L740,61.9Z" fill="#c8c8c8"/><circle cx="721.5" cy="61.5" r="1" fill="#4aa8e8"/><path d="M729.8,79.3 L734.2,79.3 L732,81.7Z" fill="#d8d8d8"/><path d="M775.2,39.5 L785.2,45 V56.5 L775.2,62 L765.2,56.5 V45Z" fill="none" stroke="#b0b0b0" stroke-width="0.7"/><path d="M775.2,50.5 V41 M775.2,50.5 L767.5,55.5 M775.2,50.5 L783,55.5" stroke="#b8b8b8" stroke-width="0.9"/><path d="M775.2,50.5 V42" stroke="#4aa8e8" stroke-width="1"/><path d="M775.2,50.5 L768,55" stroke="#30b050" stroke-width="1"/><path d="M775.2,50.5 L782.5,55" stroke="#e04040" stroke-width="1"/><circle cx="775.2" cy="40.5" r="1.5" fill="none" stroke="#4aa8e8"/><rect x="766" y="54" width="3" height="3" fill="none" stroke="#30b050"/><rect x="781.5" y="54" width="3" height="3" fill="none" stroke="#e04040"/><circle cx="775.2" cy="50.5" r="1.4" fill="#c8c8c8"/><path d="M789.8,76.3 L794.2,76.3 L792,78.7Z" fill="#d8d8d8"/><path d="M808.8,43 L814,39 H827 L822,43Z" fill="#d8d8d8"/><path d="M808.8,47.5 L814,43.5 H827 L822,47.5Z" fill="#e8e8e8"/><path d="M808.8,52 L814,48 H825 L820,52Z" fill="#d0d0d0"/><path d="M808.8,56.4 L814,52.4 H822 L818,56.4Z" fill="#e4e4e4"/><rect x="821.3" y="48" width="11.2" height="14" fill="#f4f4f4"/><rect x="823" y="50" width="7.8" height="4" fill="#4aa8e8"/><path d="M823,56.5 H830.5 M823,58.5 H830.5" stroke="#888" stroke-width="0.6"/><rect x="842.4" y="38.7" width="146.6" height="14.3" fill="#4b5568"/><circle cx="850.2" cy="44.5" r="3.5" fill="#f8d048"/><rect x="848.5" y="48" width="3.4" height="2.5" fill="#e8e8e8"/><circle cx="863.6" cy="45.8" r="3.3" fill="#f8d048"/><path d="M863.6,40 V51.6 M857.8,45.8 H869.4 M859.5,41.7 L867.7,49.9 M867.7,41.7 L859.5,49.9" stroke="#f8d048" stroke-width="0.8"/><rect x="872.2" y="45.5" width="8" height="5.6" fill="#f8c848"/><path d="M878,45.5 V43 A2.5,2.5 0 0 1 883,43 V44.5" fill="none" stroke="#f8c848" stroke-width="1.2"/><rect x="875.5" y="47.3" width="1.3" height="2" fill="#8a6a20"/><rect x="887" y="41.5" width="9.8" height="9.6" fill="#fafafa"/><text x="900.5" y="49.5" font-size="9.5" fill="#e0e0e0" font-family="Liberation Sans">0</text><path d="M983.0999999999999,44.599999999999994 L987.5,44.599999999999994 L985.3,47.0Z" fill="#e8e8e8"/><path d="M843.7,62.3 L846.7,59.3 H852.7 L849.7,62.3Z" fill="#d8d8d8"/><circle cx="852.7" cy="65.3" r="2.2" fill="#40c8e0"/><rect x="851.9000000000001" y="67.3" width="1.6" height="1.5" fill="#40c8e0"/><path d="M860.4,61.3 L863.4,58.8 H869.4 L866.4,61.3Z M860.4,63.8 L863.4,61.3 H869.4 L866.4,63.8Z M860.4,66.3 L863.4,63.8 H869.4 L866.4,66.3Z" fill="#d0d0d0" stroke="#3b4453" stroke-width="0.4"/><path d="M860.4,63.8 L863.4,61.3 H869.4 L866.4,63.8Z" fill="#4aa8e8"/><path d="M867.4,68.3 L871.4,64.3" stroke="#f0f0f0" stroke-width="1.2"/><path d="M877.8,62.3 L880.8,59.3 H886.8 L883.8,62.3Z" fill="#d8d8d8"/><circle cx="885.8" cy="65.8" r="2" fill="#40c8e0"/><path d="M883.3,65.8 H888.3 M885.8,63.3 V68.3" stroke="#40c8e0" stroke-width="0.6"/><path d="M894.9,62.3 L897.9,59.3 H903.9 L900.9,62.3Z" fill="#d8d8d8"/><rect x="901.4" y="64.3" width="5.5" height="4.5" fill="#40c8e0"/><path d="M902.4,64.3 V62.8 A1.7,1.7 0 0 1 905.9,62.8 V64.3" fill="none" stroke="#40c8e0" stroke-width="0.9"/><path d="M912,61.3 L915,58.8 H921 L918,61.3Z M912,63.8 L915,61.3 H921 L918,63.8Z M912,66.3 L915,63.8 H921 L918,66.3Z" fill="#d0d0d0" stroke="#3b4453" stroke-width="0.4"/><path d="M913,63.3 L917,60.3 H924 L920,63.3Z" fill="#4aa8e8"/><circle cx="919" cy="59.8" r="2.5" fill="#d8d8d8"/><path d="M843.7,78.6 L846.7,76.1 H852.7 L849.7,78.6Z M843.7,81.1 L846.7,78.6 H852.7 L849.7,81.1Z M843.7,83.6 L846.7,81.1 H852.7 L849.7,83.6Z" fill="#d0d0d0" stroke="#3b4453" stroke-width="0.4"/><circle cx="852.7" cy="83.1" r="2.2" fill="#f8d048"/><path d="M860.4,78.6 L863.4,76.1 H869.4 L866.4,78.6Z M860.4,81.1 L863.4,78.6 H869.4 L866.4,81.1Z M860.4,83.6 L863.4,81.1 H869.4 L866.4,83.6Z" fill="#d0d0d0" stroke="#3b4453" stroke-width="0.4"/><path d="M860.4,81.1 L863.4,78.6 H869.4 L866.4,81.1Z" fill="#4aa8e8"/><path d="M867.4,85.6 L871.4,81.6" stroke="#f0f0f0" stroke-width="1.2"/><path d="M877.8,78.6 L880.8,76.1 H886.8 L883.8,78.6Z M877.8,81.1 L880.8,78.6 H886.8 L883.8,81.1Z M877.8,83.6 L880.8,81.1 H886.8 L883.8,83.6Z" fill="#d0d0d0" stroke="#3b4453" stroke-width="0.4"/><circle cx="886.3" cy="83.1" r="2" fill="#f8d048"/><path d="M886.3,79.6 V86.6 M882.8,83.1 H889.8" stroke="#f8d048" stroke-width="0.6"/><path d="M894.9,79.6 L897.9,76.6 H903.9 L900.9,79.6Z" fill="#d8d8d8"/><rect x="899.9" y="82.6" width="5.5" height="4.5" fill="#f8c848"/><path d="M903.9,82.6 V81.1 A1.7,1.7 0 0 1 906.9,81.1" fill="none" stroke="#f8c848" stroke-width="0.9"/><path d="M912,78.6 L915,76.1 H921 L918,78.6Z M912,81.1 L915,78.6 H921 L918,81.1Z M912,83.6 L915,81.1 H921 L918,83.6Z" fill="#d0d0d0" stroke="#3b4453" stroke-width="0.4"/><path d="M919,82.6 L922,81.6 L924,84.6 L921,86.6Z" fill="#f8d048"/><path d="M997,41 H995.5 V61.5 H997 M1013.5,41 H1015 V61.5 H1013.5" fill="none" stroke="#c0c0c0" stroke-width="0.8"/><rect x="998" y="45" width="9" height="6" fill="#3b4453" stroke="#4aa8e8" stroke-width="1"/><circle cx="1002.5" cy="56" r="3.5" fill="#8c8c8c"/><circle cx="1012" cy="44.5" r="2.8" fill="#f8d048"/><path d="M1012,39.5 V49.5 M1007,44.5 H1017 M1008.5,41 L1015.5,48 M1015.5,41 L1008.5,48" stroke="#f8d048" stroke-width="0.9"/><path d="M1025.7,40 H1024.2 V52 H1025.7 M1032.7,40 H1034.2 V52 H1032.7" fill="none" stroke="#b0b0b0" stroke-width="0.7"/><rect x="1026.7" y="41.5" width="5" height="3.5" fill="none" stroke="#4aa8e8" stroke-width="0.8"/><circle cx="1029.2" cy="48.5" r="2" fill="#8c8c8c"/><path d="M1033.2,46 L1036.2,49 M1036.2,46 L1033.2,49" stroke="#e03838" stroke-width="1"/><path d="M1025.7,57 H1024.2 V69 H1025.7 M1032.7,57 H1034.2 V69 H1032.7" fill="none" stroke="#b0b0b0" stroke-width="0.7"/><rect x="1026.7" y="58.5" width="5" height="3.5" fill="none" stroke="#4aa8e8" stroke-width="0.8"/><circle cx="1029.2" cy="65.5" r="2" fill="#8c8c8c"/><path d="M1031.7,68.5 L1035.7,64" stroke="#f0c040" stroke-width="1.5"/><path d="M1035.2,64.5 L1036.2,63.3" stroke="#e03838" stroke-width="1.3"/><rect x="1022.5" y="73.5" width="13.5" height="15" fill="#3b5068" stroke="#4aa0e0" stroke-width="0.9"/><path d="M1025.5,75.5 H1024.5 V86.5 H1025.5 M1031.5,75.5 H1032.5 V86.5" fill="none" stroke="#b0b0b0" stroke-width="0.6"/><circle cx="1028.5" cy="78.5" r="1.6" fill="#30c050"/><circle cx="1028.5" cy="83.5" r="1.6" fill="#30c050"/><path d="M1031,79.5 V87 L1032.8,85.5 L1034,88 L1035,87.5 L1033.8,85 H1036Z" fill="#fff" stroke="#222" stroke-width="0.4"/><path d="M1051,42.2 H1059.5 V50 H1074 V58.8 H1051Z" fill="#dcdcdc"/><path d="M1059.8,78.3 L1064.2,78.3 L1062,80.7Z" fill="#d8d8d8"/></svg>
<span class="t" style="left:601.5px;top:41.86px;font-size:9.5px;color:#e4e4e4;font-weight:normal;font-style:normal;font-family:'Liberation Sans',sans-serif;transform:scaleX(0.901);">2D Wireframe</span>
<span class="t" style="left:600.8px;top:59.46px;font-size:9.5px;color:#e4e4e4;font-weight:normal;font-style:normal;font-family:'Liberation Sans',sans-serif;transform:scaleX(0.864);">Unsaved View</span>
<div class="a" style="left:512.9px;top:74px;width:55.8px;height:14px;overflow:hidden;z-index:6"><span class="t" style="left:3.3px;top:2.76px;font-size:9.5px;color:#e4e4e4;transform:scaleX(0.764)">ASO_G_CROSSMAX</span></div>
</body></html>
